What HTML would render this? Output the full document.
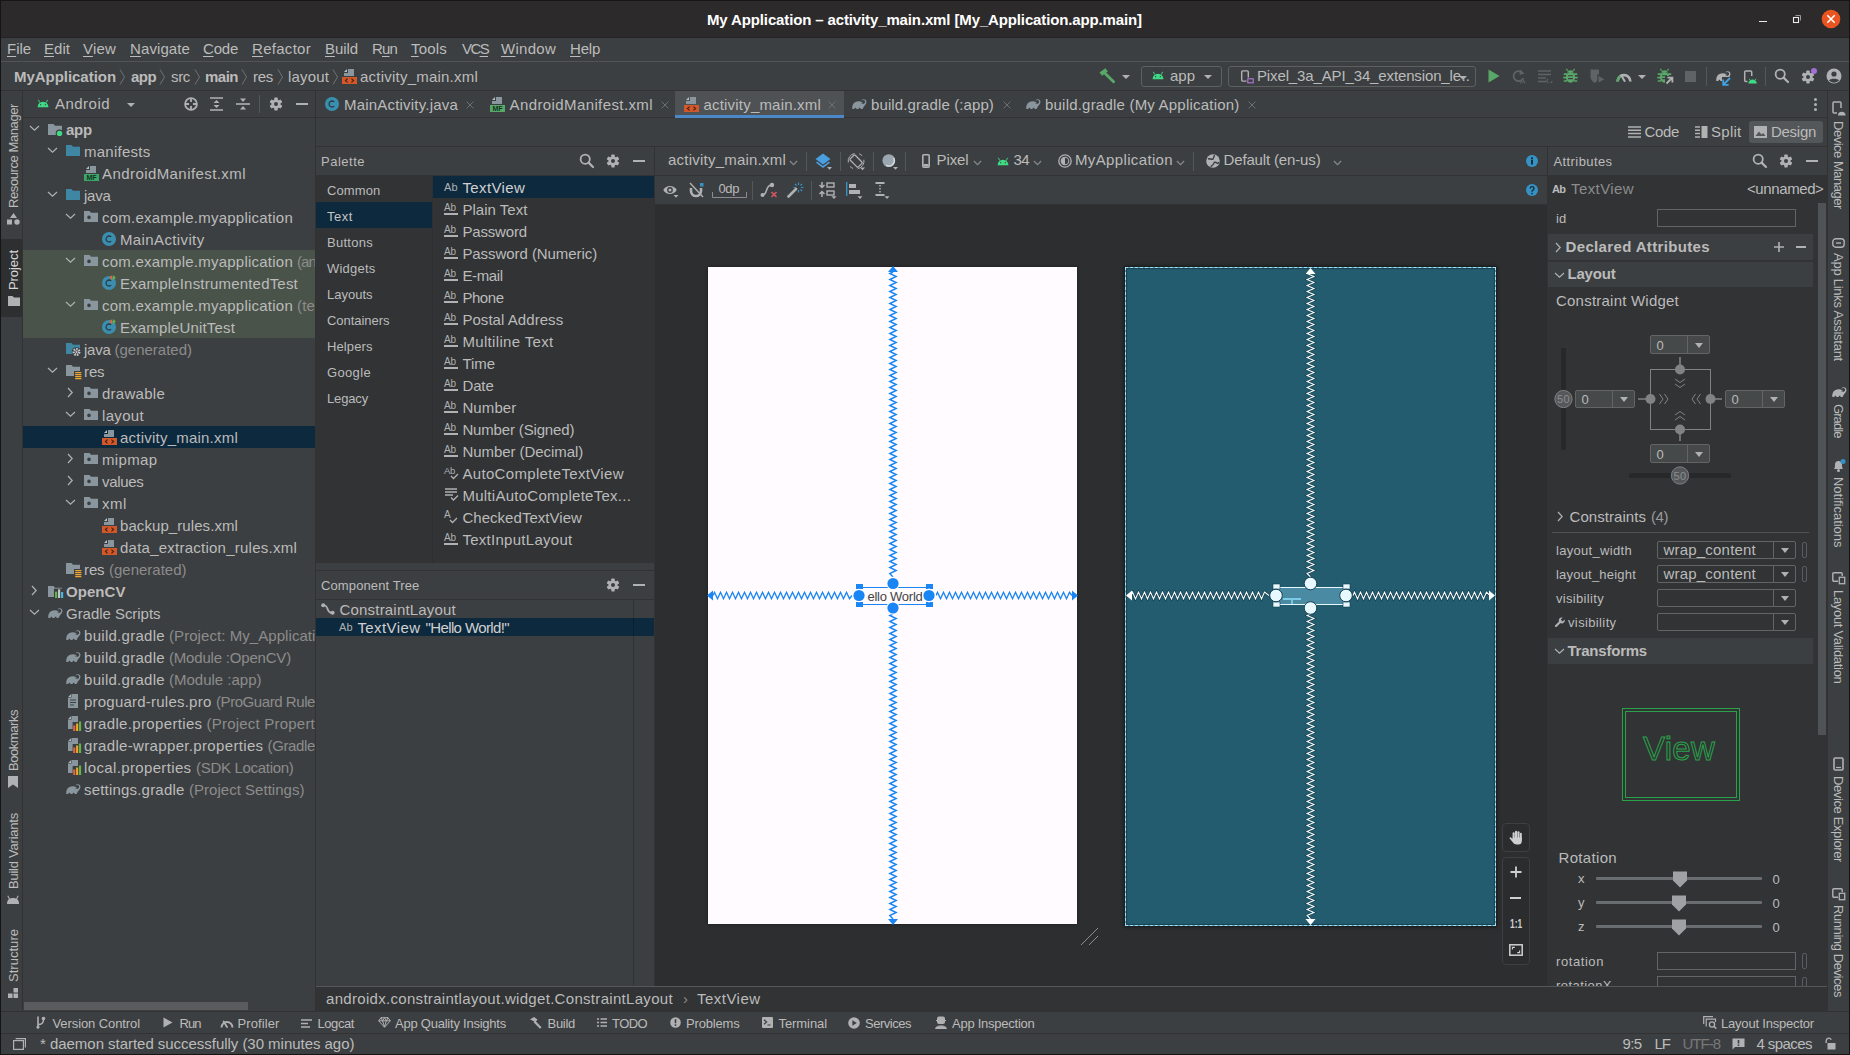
<!DOCTYPE html>
<html><head><meta charset="utf-8"><title>My Application</title>
<style>
html,body{margin:0;padding:0;}
body{width:1850px;height:1055px;overflow:hidden;background:#3c3f41;font-family:"Liberation Sans",sans-serif;position:relative;}
#r{position:absolute;left:0;top:0;width:1850px;height:1055px;overflow:hidden;}
#r div,#r svg,#r span.t{position:absolute;}
span.t{white-space:nowrap;}
u{text-decoration:underline;text-underline-offset:2px;text-decoration-thickness:1px;}
</style></head><body><div id="r">
<div style="left:0px;top:0px;width:1850px;height:37px;background:#2c2a2b;"></div>
<div style="left:0px;top:0px;width:1850px;height:1px;background:#161616;"></div>
<div style="left:0px;top:37px;width:1850px;height:1px;background:#232323;"></div>
<span class="t" style="left:707px;top:11px;font-size:15px;line-height:18px;color:#ffffff;font-weight:bold;letter-spacing:-0.132px;">My Application – activity_main.xml [My_Application.app.main]</span>
<div style="left:1759px;top:21px;width:8px;height:1px;background:#ececec;"></div>
<svg style="left:1792px;top:14px;" width="10" height="10" viewBox="0 0 10 10"><rect x="1.5" y="3.5" width="5" height="5" fill="none" stroke="#ececec" stroke-width="1.1"/><path d="M3.5 1.5 H8.5 V6.5" fill="none" stroke="#9a9a9a" stroke-width="1"/></svg>
<svg style="left:1821px;top:9px;" width="20" height="20" viewBox="0 0 20 20"><circle cx="10" cy="10" r="9.3" fill="#e95420"/><path d="M6.3 6.3 L13.7 13.7 M13.7 6.3 L6.3 13.7" stroke="#fff" stroke-width="1.6"/></svg>
<div style="left:0px;top:38px;width:1850px;height:23px;background:#3c3f41;"></div>
<div style="left:0px;top:61px;width:1850px;height:1px;background:#515355;"></div>
<span class="t" style="left:7px;top:40px;font-size:15px;line-height:18px;color:#bbbbbb;letter-spacing:-0.039px;"><u>F</u>ile</span>
<span class="t" style="left:44px;top:40px;font-size:15px;line-height:18px;color:#bbbbbb;letter-spacing:0.039px;"><u>E</u>dit</span>
<span class="t" style="left:83px;top:40px;font-size:15px;line-height:18px;color:#bbbbbb;letter-spacing:0.191px;"><u>V</u>iew</span>
<span class="t" style="left:130px;top:40px;font-size:15px;line-height:18px;color:#bbbbbb;letter-spacing:0.100px;"><u>N</u>avigate</span>
<span class="t" style="left:203px;top:40px;font-size:15px;line-height:18px;color:#bbbbbb;letter-spacing:-0.215px;"><u>C</u>ode</span>
<span class="t" style="left:252px;top:40px;font-size:15px;line-height:18px;color:#bbbbbb;letter-spacing:0.287px;"><u>R</u>efactor</span>
<span class="t" style="left:325px;top:40px;font-size:15px;line-height:18px;color:#bbbbbb;letter-spacing:-0.069px;"><u>B</u>uild</span>
<span class="t" style="left:372px;top:40px;font-size:15px;line-height:18px;color:#bbbbbb;letter-spacing:-0.839px;">R<u>u</u>n</span>
<span class="t" style="left:411px;top:40px;font-size:15px;line-height:18px;color:#bbbbbb;letter-spacing:0.197px;"><u>T</u>ools</span>
<span class="t" style="left:462px;top:40px;font-size:15px;line-height:18px;color:#bbbbbb;letter-spacing:-1.609px;">VC<u>S</u></span>
<span class="t" style="left:501px;top:40px;font-size:15px;line-height:18px;color:#bbbbbb;letter-spacing:0.276px;"><u>W</u>indow</span>
<span class="t" style="left:570px;top:40px;font-size:15px;line-height:18px;color:#bbbbbb;letter-spacing:-0.211px;"><u>H</u>elp</span>
<div style="left:0px;top:62px;width:1850px;height:28px;background:#3c3f41;"></div>
<div style="left:0px;top:90px;width:1850px;height:1px;background:#323232;"></div>
<span class="t" style="left:14px;top:68px;font-size:15px;line-height:18px;color:#bbbbbb;font-weight:bold;letter-spacing:-0.038px;">MyApplication</span>
<span class="t" style="left:131px;top:68px;font-size:15px;line-height:18px;color:#bbbbbb;font-weight:bold;letter-spacing:-0.552px;">app</span>
<span class="t" style="left:171px;top:68px;font-size:15px;line-height:18px;color:#bbbbbb;letter-spacing:-0.333px;">src</span>
<span class="t" style="left:205px;top:68px;font-size:15px;line-height:18px;color:#bbbbbb;font-weight:bold;letter-spacing:-0.504px;">main</span>
<span class="t" style="left:253px;top:68px;font-size:15px;line-height:18px;color:#bbbbbb;letter-spacing:-0.281px;">res</span>
<span class="t" style="left:288px;top:68px;font-size:15px;line-height:18px;color:#bbbbbb;letter-spacing:0.161px;">layout</span>
<svg style="left:119px;top:69px;" width="7" height="16" viewBox="0 0 7 16"><path d="M1 0.5 L5.5 8 L1 15.5" fill="none" stroke="#6e7173" stroke-width="1"/></svg>
<svg style="left:159px;top:69px;" width="7" height="16" viewBox="0 0 7 16"><path d="M1 0.5 L5.5 8 L1 15.5" fill="none" stroke="#6e7173" stroke-width="1"/></svg>
<svg style="left:194px;top:69px;" width="7" height="16" viewBox="0 0 7 16"><path d="M1 0.5 L5.5 8 L1 15.5" fill="none" stroke="#6e7173" stroke-width="1"/></svg>
<svg style="left:241px;top:69px;" width="7" height="16" viewBox="0 0 7 16"><path d="M1 0.5 L5.5 8 L1 15.5" fill="none" stroke="#6e7173" stroke-width="1"/></svg>
<svg style="left:277px;top:69px;" width="7" height="16" viewBox="0 0 7 16"><path d="M1 0.5 L5.5 8 L1 15.5" fill="none" stroke="#6e7173" stroke-width="1"/></svg>
<svg style="left:332px;top:69px;" width="7" height="16" viewBox="0 0 7 16"><path d="M1 0.5 L5.5 8 L1 15.5" fill="none" stroke="#6e7173" stroke-width="1"/></svg>
<svg style="left:342px;top:69px;" width="15" height="15" viewBox="0 0 15 15"><path d="M6 0 H12 V7 H2 V4 H6 Z" fill="#8a969d"/><path d="M5 0 V3 H2 Z" fill="#b4bec4"/><rect x="0" y="8" width="15" height="7" fill="#d0582a"/><path d="M5.6 9.6 L3.4 11.5 L5.6 13.4 M9.4 9.6 L11.6 11.5 L9.4 13.4" fill="none" stroke="#4a1d0c" stroke-width="1.1"/></svg>
<span class="t" style="left:360px;top:68px;font-size:15px;line-height:18px;color:#bbbbbb;letter-spacing:0.223px;">activity_main.xml</span>
<svg style="left:1099px;top:68px;" width="17" height="16" viewBox="0 0 17 16"><path d="M1.8 6.2 L7.6 1.8" stroke="#59a869" stroke-width="4.2"/><path d="M6.2 5.6 L14.6 13.8" stroke="#59a869" stroke-width="2.8" stroke-linecap="round"/></svg>
<svg style="left:1122.0px;top:75.0px;" width="8" height="4" viewBox="0 0 8 4"><path d="M0 0 L8 0 L4.0 4 Z" fill="#afb1b3"/></svg>
<div style="left:1141px;top:66px;width:81px;height:21px;background:transparent;border:1px solid #5e6060;box-sizing:border-box;border-radius:3px;"></div>
<svg style="left:1151px;top:70px;" width="14" height="10" viewBox="0 0 16 12"><path d="M1.5 11 A6.5 6.5 0 0 1 14.5 11 Z" fill="#3ddc84"/><path d="M4 5.2 L2.6 2.6 M12 5.2 L13.4 2.6" stroke="#3ddc84" stroke-width="1.1" stroke-linecap="round"/><circle cx="5.2" cy="8" r="0.8" fill="#3c3f41"/><circle cx="10.8" cy="8" r="0.8" fill="#3c3f41"/></svg>
<span class="t" style="left:1170px;top:67px;font-size:15px;line-height:18px;color:#bbbbbb;letter-spacing:-0.010px;">app</span>
<svg style="left:1204.0px;top:75.0px;" width="8" height="4" viewBox="0 0 8 4"><path d="M0 0 L8 0 L4.0 4 Z" fill="#afb1b3"/></svg>
<div style="left:1228px;top:66px;width:248px;height:21px;background:transparent;border:1px solid #5e6060;box-sizing:border-box;border-radius:3px;"></div>
<svg style="left:1240px;top:70px;" width="14" height="15" viewBox="0 0 14 15"><rect x="1.7" y="0.9" width="6.6" height="10.2" rx="1" fill="none" stroke="#afb1b3" stroke-width="1.4"/><rect x="6.5" y="7.5" width="8" height="7" fill="#3c3f41"/><rect x="7.8" y="8.8" width="5.4" height="4" fill="none" stroke="#b07ad9" stroke-width="1.1"/></svg>
<span class="t" style="left:1257px;top:67px;font-size:15px;line-height:18px;color:#bbbbbb;letter-spacing:-0.131px;">Pixel_3a_API_34_extension_le</span>
<span class="t" style="left:1461.5px;top:67px;font-size:15px;line-height:18px;color:#bbbbbb;">..</span>
<svg style="left:1459.0px;top:76.0px;" width="8" height="4" viewBox="0 0 8 4"><path d="M0 0 L8 0 L4.0 4 Z" fill="#afb1b3"/></svg>
<svg style="left:1488px;top:69px;" width="12" height="14" viewBox="0 0 12 14"><path d="M0.5 0.5 L11.5 7 L0.5 13.5 Z" fill="#59a869"/></svg>
<svg style="left:1511px;top:69px;" width="15" height="15" viewBox="0 0 15 15"><path d="M11.5 4 A5 5 0 1 0 12.2 9" fill="none" stroke="#5f6365" stroke-width="1.8"/><path d="M9 0.5 L13.5 4.5 L8.5 6 Z" fill="#5f6365"/><path d="M9.5 14.5 L11.7 9.5 L14 14.5 M10.3 13 H13.2" fill="none" stroke="#5f6365" stroke-width="1"/></svg>
<svg style="left:1538px;top:70px;" width="16" height="13" viewBox="0 0 16 13"><path d="M0 1 H13 M0 4.5 H13 M0 8 H8 M0 11.5 H8" stroke="#5f6365" stroke-width="1.6"/><path d="M10 9 A2.5 2.5 0 1 0 14 11" fill="none" stroke="#5f6365" stroke-width="1.2"/></svg>
<svg style="left:1563px;top:68px;" width="15" height="16" viewBox="0 0 15 16"><ellipse cx="7.5" cy="9.3" rx="4.6" ry="5.4" fill="#59a869"/><path d="M4 4.6 A3.6 3.2 0 0 1 11 4.6 Z" fill="#59a869"/><path d="M4.6 2.6 L3.4 0.8 M10.4 2.6 L11.6 0.8" stroke="#59a869" stroke-width="1.2"/><path d="M0.8 6.2 H4 M14.2 6.2 H11 M0.3 9.6 H4 M14.7 9.6 H11 M0.8 13 H4 M14.2 13 H11" stroke="#59a869" stroke-width="1.7"/><path d="M5 7.8 H10 M5 10.6 H10" stroke="#3c3f41" stroke-width="1.1"/></svg>
<svg style="left:1590px;top:69px;" width="16" height="15" viewBox="0 0 16 15"><path d="M0.5 0.5 H9 V7 C9 11 6 13 4.7 14 C3.4 13 0.5 11 0.5 7 Z" fill="#5f6365"/><path d="M8 6 L15.5 10.3 L8 14.6 Z" fill="#5f6365" stroke="#3c3f41" stroke-width="1.2"/></svg>
<svg style="left:1616px;top:70px;" width="16" height="12" viewBox="0 0 16 12"><path d="M1.6 11.5 A6.4 6.4 0 0 1 14.4 11.5" fill="none" stroke="#afb1b3" stroke-width="2.6"/><path d="M1.6 11.5 A6.4 6.4 0 0 1 4.6 6" fill="none" stroke="#59a869" stroke-width="2.6"/><path d="M8.6 11 L5.4 5.4" stroke="#afb1b3" stroke-width="2" stroke-linecap="round"/></svg>
<svg style="left:1638.0px;top:75.0px;" width="8" height="4" viewBox="0 0 8 4"><path d="M0 0 L8 0 L4.0 4 Z" fill="#afb1b3"/></svg>
<svg style="left:1657px;top:68px;" width="17" height="17" viewBox="0 0 17 17"><ellipse cx="7.5" cy="9.3" rx="4.6" ry="5.4" fill="#59a869"/><path d="M4 4.6 A3.6 3.2 0 0 1 11 4.6 Z" fill="#59a869"/><path d="M4.6 2.6 L3.4 0.8 M10.4 2.6 L11.6 0.8" stroke="#59a869" stroke-width="1.2"/><path d="M0.8 6.2 H4 M14.2 6.2 H11 M0.3 9.6 H4 M14.7 9.6 H11 M0.8 13 H4 M14.2 13 H11" stroke="#59a869" stroke-width="1.7"/><path d="M5 7.8 H10 M5 10.6 H10" stroke="#3c3f41" stroke-width="1.1"/><rect x="8" y="8" width="9" height="9" fill="#3c3f41"/><path d="M9.5 15.5 L15 10 M10.5 9.6 H15.4 V14.5" fill="none" stroke="#afb1b3" stroke-width="1.8"/></svg>
<div style="left:1685px;top:71px;width:11px;height:11px;background:#5f6365;"></div>
<div style="left:1706px;top:67px;width:1px;height:19px;background:#55585a;"></div>
<svg style="left:1715.8px;top:70.6px;" width="15.3" height="10.8" viewBox="0 0 17 12"><path d="M15.3 1.2 C14.2 -0.1 12.2 -0.2 11 0.9 C10.6 1.3 10.9 1.8 11.3 1.6 C12.2 0.9 13.5 1 14.2 1.9 C15 2.9 14.6 4.2 13.6 4.9 L12.6 5.6 C12 3.4 10.2 2.4 8 2.4 C4.5 2.4 1.6 3.8 0.6 7.2 C0.2 8.6 0.2 10.2 0.4 11.6 L2.6 11.6 C2.6 10.6 3 9.8 3.8 9.8 C4.6 9.8 4.9 10.6 4.9 11.6 L7.3 11.6 C7.3 10.6 7.7 9.8 8.5 9.8 C9.3 9.8 9.6 10.6 9.6 11.6 L11.6 11.6 C12.4 9.6 13 8.2 14.6 6.6 C16.2 5.1 16.5 2.7 15.3 1.2 Z" fill="#afb1b3"/><circle cx="11.3" cy="4.6" r="0.7" fill="#3c3f41"/></svg>
<svg style="left:1722px;top:77px;" width="9" height="9" viewBox="0 0 9 9"><rect width="9" height="9" fill="#3c3f41"/><path d="M8 1 L2 7 M1.2 2.4 V7.8 H6.6" fill="none" stroke="#40a0e0" stroke-width="1.8"/></svg>
<svg style="left:1743px;top:70px;" width="16" height="15" viewBox="0 0 16 15"><rect x="1.7" y="0.9" width="7" height="10.6" rx="1" fill="none" stroke="#afb1b3" stroke-width="1.5"/><rect x="4.5" y="6" width="11" height="9" fill="#3c3f41"/><path d="M5.4 13.6 A4.2 4.2 0 0 1 13.8 13.6 Z" fill="#3ddc84"/><path d="M7 10.2 L6.2 8.8 M12.2 10.2 L13 8.8" stroke="#3ddc84" stroke-width="0.9"/></svg>
<div style="left:1765px;top:67px;width:1px;height:19px;background:#55585a;"></div>
<svg style="left:1774px;top:68px;" width="16" height="16" viewBox="0 0 16 16"><circle cx="6.2" cy="6.2" r="4.6" fill="none" stroke="#afb1b3" stroke-width="1.8"/><path d="M9.6 9.6 L14 14" stroke="#afb1b3" stroke-width="2.2" stroke-linecap="round"/></svg>
<svg style="left:1800px;top:69px;" width="16" height="16" viewBox="0 0 16 16"><g transform="translate(8,8) scale(0.9142857142857144)"><rect x="-1.9" y="-7" width="3.8" height="3.6" rx="0.8" transform="rotate(0)" fill="#afb1b3"/><rect x="-1.9" y="-7" width="3.8" height="3.6" rx="0.8" transform="rotate(60)" fill="#afb1b3"/><rect x="-1.9" y="-7" width="3.8" height="3.6" rx="0.8" transform="rotate(120)" fill="#afb1b3"/><rect x="-1.9" y="-7" width="3.8" height="3.6" rx="0.8" transform="rotate(180)" fill="#afb1b3"/><rect x="-1.9" y="-7" width="3.8" height="3.6" rx="0.8" transform="rotate(240)" fill="#afb1b3"/><rect x="-1.9" y="-7" width="3.8" height="3.6" rx="0.8" transform="rotate(300)" fill="#afb1b3"/><circle r="5" fill="#afb1b3"/><circle r="2.2" fill="#3c3f41"/></g></svg>
<svg style="left:1811px;top:68px;" width="6" height="6" viewBox="0 0 6 6"><circle cx="3" cy="3" r="3" fill="#a36fd6"/></svg>
<svg style="left:1826px;top:68px;" width="16" height="16" viewBox="0 0 16 16"><circle cx="8" cy="8" r="7.5" fill="#afb1b3"/><circle cx="8" cy="6" r="2.6" fill="#3c3f41"/><path d="M3 12.6 C4 10 12 10 13 12.6 A7 7 0 0 1 3 12.6 Z" fill="#3c3f41"/></svg>
<div style="left:0px;top:91px;width:22px;height:920px;background:#3c3f41;"></div>
<div style="left:22px;top:91px;width:1px;height:920px;background:#323232;"></div>
<div style="left:0px;top:239px;width:22px;height:78px;background:#2d2f30;"></div>
<span class="t" style="left:5.5px;top:208px;font-size:13px;line-height:16px;color:#bbbbbb;letter-spacing:-0.412px;transform-origin:0 0;transform:rotate(-90deg);">Resource Manager</span>
<svg style="left:7px;top:213px;" width="13" height="12" viewBox="0 0 13 12"><path d="M6.5 0 L10 5 H3 Z" fill="#afb1b3"/><rect x="0" y="6.5" width="5" height="5" fill="#afb1b3"/><circle cx="10" cy="9" r="2.7" fill="#afb1b3"/></svg>
<span class="t" style="left:5.5px;top:290px;font-size:13px;line-height:16px;color:#d6d6d6;letter-spacing:-0.067px;transform-origin:0 0;transform:rotate(-90deg);">Project</span>
<svg style="left:7.5px;top:296px;" width="12" height="10" viewBox="0 0 12 10"><path d="M0 0 H4.5 L6 1.5 H12 V10 H0 Z" fill="#afb1b3"/></svg>
<span class="t" style="left:5.5px;top:771px;font-size:13px;line-height:16px;color:#bbbbbb;letter-spacing:-0.448px;transform-origin:0 0;transform:rotate(-90deg);">Bookmarks</span>
<svg style="left:8px;top:776px;" width="10" height="12" viewBox="0 0 10 12"><path d="M0 0 H10 V12 L5 8.5 L0 12 Z" fill="#afb1b3"/></svg>
<span class="t" style="left:5.5px;top:889px;font-size:13px;line-height:16px;color:#bbbbbb;letter-spacing:-0.233px;transform-origin:0 0;transform:rotate(-90deg);">Build Variants</span>
<svg style="left:7px;top:895px;" width="12" height="9" viewBox="0 0 12 9"><path d="M0 9 C0 5 2 3 6 3 C10 3 12 5 12 9 Z" fill="#afb1b3"/><path d="M2.5 4 L0.8 0.8 M9.5 4 L11.2 0.8" stroke="#afb1b3" stroke-width="1.1"/></svg>
<span class="t" style="left:5.5px;top:982px;font-size:13px;line-height:16px;color:#bbbbbb;letter-spacing:0.028px;transform-origin:0 0;transform:rotate(-90deg);">Structure</span>
<svg style="left:8px;top:988px;" width="10" height="10" viewBox="0 0 10 10"><rect x="5.5" y="0" width="4.5" height="4.5" fill="#afb1b3"/><rect x="0" y="5.5" width="4.5" height="4.5" fill="#afb1b3"/><rect x="5.5" y="5.5" width="4.5" height="4.5" fill="#afb1b3"/></svg>
<div style="left:23px;top:91px;width:292px;height:26px;background:#3c3f41;"></div>
<div style="left:23px;top:117px;width:292px;height:1px;background:#323232;"></div>
<div style="left:315px;top:91px;width:1px;height:920px;background:#323232;"></div>
<svg style="left:36px;top:98px;" width="14" height="10" viewBox="0 0 16 12"><path d="M1.5 11 A6.5 6.5 0 0 1 14.5 11 Z" fill="#3ddc84"/><path d="M4 5.2 L2.6 2.6 M12 5.2 L13.4 2.6" stroke="#3ddc84" stroke-width="1.1" stroke-linecap="round"/><circle cx="5.2" cy="8" r="0.8" fill="#3c3f41"/><circle cx="10.8" cy="8" r="0.8" fill="#3c3f41"/></svg>
<span class="t" style="left:55px;top:95px;font-size:15px;line-height:18px;color:#bbbbbb;letter-spacing:0.471px;">Android</span>
<svg style="left:127.0px;top:103.0px;" width="8" height="4" viewBox="0 0 8 4"><path d="M0 0 L8 0 L4.0 4 Z" fill="#afb1b3"/></svg>
<svg style="left:184px;top:97px;" width="14" height="14" viewBox="0 0 14 14"><circle cx="7" cy="7" r="5.9" fill="none" stroke="#afb1b3" stroke-width="1.8"/><path d="M7 1 V5 M7 9 V13 M1 7 H5 M9 7 H13" stroke="#afb1b3" stroke-width="1.8"/></svg>
<svg style="left:210px;top:97px;" width="13" height="14" viewBox="0 0 13 14"><path d="M0 1 H13 M0 13 H13" stroke="#afb1b3" stroke-width="1.6"/><path d="M6.5 3 L9.5 6 H3.5 Z M6.5 11 L9.5 8 H3.5 Z" fill="#afb1b3"/></svg>
<svg style="left:236px;top:97px;" width="14" height="14" viewBox="0 0 14 14"><path d="M0 7 H14" stroke="#afb1b3" stroke-width="1.6"/><path d="M7 5 L10 1.5 H4 Z M7 9 L10 12.5 H4 Z" fill="#afb1b3"/></svg>
<div style="left:259px;top:95px;width:1px;height:18px;background:#55585a;"></div>
<svg style="left:268px;top:96px;" width="16" height="16" viewBox="0 0 16 16"><g transform="translate(8,8) scale(0.9142857142857144)"><rect x="-1.9" y="-7" width="3.8" height="3.6" rx="0.8" transform="rotate(0)" fill="#afb1b3"/><rect x="-1.9" y="-7" width="3.8" height="3.6" rx="0.8" transform="rotate(60)" fill="#afb1b3"/><rect x="-1.9" y="-7" width="3.8" height="3.6" rx="0.8" transform="rotate(120)" fill="#afb1b3"/><rect x="-1.9" y="-7" width="3.8" height="3.6" rx="0.8" transform="rotate(180)" fill="#afb1b3"/><rect x="-1.9" y="-7" width="3.8" height="3.6" rx="0.8" transform="rotate(240)" fill="#afb1b3"/><rect x="-1.9" y="-7" width="3.8" height="3.6" rx="0.8" transform="rotate(300)" fill="#afb1b3"/><circle r="5" fill="#afb1b3"/><circle r="2.2" fill="#3c3f41"/></g></svg>
<svg style="left:296.0px;top:103px;" width="12" height="2" viewBox="0 0 12 2"><rect width="12" height="2" fill="#afb1b3"/></svg>
<div style="left:23px;top:118px;width:292px;height:893px;background:#3c3f41;"></div>
<div style="left:23px;top:250px;width:292px;height:88px;background:#4a534a;"></div>
<div style="left:23px;top:426px;width:292px;height:22px;background:#0d293e;"></div>
<div style="left:23px;top:118px;width:292px;height:880px;overflow:hidden;">
<div style="left:-23px;top:-118px;width:400px;height:900px;">
<svg style="left:29.0px;top:125.0px;" width="11" height="7" viewBox="0 0 11 7"><path d="M1 1 L5.5 5.2 L10 1" fill="none" stroke="#afb1b3" stroke-width="1.2"/></svg>
<svg style="left:48px;top:124px;" width="17" height="14" viewBox="0 0 17 14"><path d="M0 0 H5.5 L7 1.8 H14 V11 H0 Z" fill="#8a969d"/><circle cx="11.5" cy="9.4" r="3.8" fill="#3c3f41"/><circle cx="11.5" cy="9.4" r="2.7" fill="#3ddc84"/></svg>
<span class="t" style="left:66px;top:121px;font-size:15px;line-height:18px;color:#bbbbbb;font-weight:bold;letter-spacing:-0.219px;">app</span>
<svg style="left:47.0px;top:147.0px;" width="11" height="7" viewBox="0 0 11 7"><path d="M1 1 L5.5 5.2 L10 1" fill="none" stroke="#afb1b3" stroke-width="1.2"/></svg>
<svg style="left:66px;top:145px;" width="14" height="11" viewBox="0 0 14 11"><path d="M0 0 H5.5 L7 1.8 H14 V11 H0 Z" fill="#3e86a2"/></svg>
<span class="t" style="left:84px;top:143px;font-size:15px;line-height:18px;color:#bbbbbb;letter-spacing:0.255px;">manifests</span>
<svg style="left:84px;top:166px;" width="15" height="15" viewBox="0 0 15 15"><path d="M6 0 H12 V7 H2 V4 H6 Z" fill="#8a969d"/><path d="M5 0 V3 H2 Z" fill="#b4bec4"/><rect x="0" y="8" width="15" height="7" fill="#3ba56a"/><text x="7.5" y="14.3" font-family="Liberation Sans" font-size="7" font-weight="bold" text-anchor="middle" fill="#12351f">MF</text></svg>
<span class="t" style="left:102px;top:165px;font-size:15px;line-height:18px;color:#bbbbbb;letter-spacing:0.426px;">AndroidManifest.xml</span>
<svg style="left:47.0px;top:191.0px;" width="11" height="7" viewBox="0 0 11 7"><path d="M1 1 L5.5 5.2 L10 1" fill="none" stroke="#afb1b3" stroke-width="1.2"/></svg>
<svg style="left:66px;top:189px;" width="14" height="11" viewBox="0 0 14 11"><path d="M0 0 H5.5 L7 1.8 H14 V11 H0 Z" fill="#3e86a2"/></svg>
<span class="t" style="left:84px;top:187px;font-size:15px;line-height:18px;color:#bbbbbb;letter-spacing:-0.254px;">java</span>
<svg style="left:65.0px;top:213.0px;" width="11" height="7" viewBox="0 0 11 7"><path d="M1 1 L5.5 5.2 L10 1" fill="none" stroke="#afb1b3" stroke-width="1.2"/></svg>
<svg style="left:84px;top:211px;" width="14" height="11" viewBox="0 0 14 11"><path d="M0 0 H5.5 L7 1.8 H14 V11 H0 Z" fill="#8a969d"/><circle cx="5" cy="6.4" r="1.8" fill="#3c3f41"/></svg>
<span class="t" style="left:102px;top:209px;font-size:15px;line-height:18px;color:#bbbbbb;letter-spacing:0.236px;">com.example.myapplication</span>
<svg style="left:101px;top:231px;overflow:visible;" width="16" height="16" viewBox="0 0 16 16"><circle cx="8" cy="8" r="7" fill="#3a8fb0"/><path d="M10.2 5.9 A3 3 0 1 0 10.2 10.1" fill="none" stroke="#2b3b44" stroke-width="1.3"/></svg>
<span class="t" style="left:120px;top:231px;font-size:15px;line-height:18px;color:#bbbbbb;letter-spacing:0.374px;">MainActivity</span>
<svg style="left:65.0px;top:257.0px;" width="11" height="7" viewBox="0 0 11 7"><path d="M1 1 L5.5 5.2 L10 1" fill="none" stroke="#afb1b3" stroke-width="1.2"/></svg>
<svg style="left:84px;top:255px;" width="14" height="11" viewBox="0 0 14 11"><path d="M0 0 H5.5 L7 1.8 H14 V11 H0 Z" fill="#8a969d"/><circle cx="5" cy="6.4" r="1.8" fill="#3c3f41"/></svg>
<span class="t" style="left:102px;top:253px;font-size:15px;line-height:18px;color:#bbbbbb;letter-spacing:0.236px;">com.example.myapplication</span>
<span class="t" style="left:297px;top:253px;font-size:15px;line-height:18px;color:#8c8c8c;letter-spacing:-0.896px;">(an</span>
<svg style="left:101px;top:275px;overflow:visible;" width="16" height="16" viewBox="0 0 16 16"><circle cx="8" cy="8" r="7" fill="#3a8fb0"/><path d="M10.2 5.9 A3 3 0 1 0 10.2 10.1" fill="none" stroke="#2b3b44" stroke-width="1.3"/><path d="M8.4 2.6 L11.2 0 V5.2 Z" fill="#e8643a"/><path d="M12 0 L14.9 2.6 L12 5.2 Z" fill="#62b543"/></svg>
<span class="t" style="left:120px;top:275px;font-size:15px;line-height:18px;color:#bbbbbb;letter-spacing:0.198px;">ExampleInstrumentedTest</span>
<svg style="left:65.0px;top:301.0px;" width="11" height="7" viewBox="0 0 11 7"><path d="M1 1 L5.5 5.2 L10 1" fill="none" stroke="#afb1b3" stroke-width="1.2"/></svg>
<svg style="left:84px;top:299px;" width="14" height="11" viewBox="0 0 14 11"><path d="M0 0 H5.5 L7 1.8 H14 V11 H0 Z" fill="#8a969d"/><circle cx="5" cy="6.4" r="1.8" fill="#3c3f41"/></svg>
<span class="t" style="left:102px;top:297px;font-size:15px;line-height:18px;color:#bbbbbb;letter-spacing:0.236px;">com.example.myapplication</span>
<span class="t" style="left:297px;top:297px;font-size:15px;line-height:18px;color:#8c8c8c;letter-spacing:0.161px;">(te</span>
<svg style="left:101px;top:319px;overflow:visible;" width="16" height="16" viewBox="0 0 16 16"><circle cx="8" cy="8" r="7" fill="#3a8fb0"/><path d="M10.2 5.9 A3 3 0 1 0 10.2 10.1" fill="none" stroke="#2b3b44" stroke-width="1.3"/><path d="M8.4 2.6 L11.2 0 V5.2 Z" fill="#e8643a"/><path d="M12 0 L14.9 2.6 L12 5.2 Z" fill="#62b543"/></svg>
<span class="t" style="left:120px;top:319px;font-size:15px;line-height:18px;color:#bbbbbb;letter-spacing:0.164px;">ExampleUnitTest</span>
<svg style="left:66px;top:343px;" width="17" height="15" viewBox="0 0 17 15"><path d="M0 0 H5.5 L7 1.8 H14 V11 H0 Z" fill="#3e86a2"/><circle cx="10.5" cy="9" r="4.8" fill="#3c3f41"/><circle cx="10.5" cy="9" r="2.7" fill="none" stroke="#c4c7c9" stroke-width="2.6" stroke-dasharray="1.5 0.9"/><circle cx="10.5" cy="9" r="1" fill="#c4c7c9"/></svg>
<span class="t" style="left:84px;top:341px;font-size:15px;line-height:18px;color:#bbbbbb;letter-spacing:-0.254px;">java</span>
<span class="t" style="left:114.5px;top:341px;font-size:15px;line-height:18px;color:#8c8c8c;letter-spacing:-0.007px;">(generated)</span>
<svg style="left:47.0px;top:367.0px;" width="11" height="7" viewBox="0 0 11 7"><path d="M1 1 L5.5 5.2 L10 1" fill="none" stroke="#afb1b3" stroke-width="1.2"/></svg>
<svg style="left:66px;top:365px;" width="17" height="15" viewBox="0 0 17 15"><path d="M0 0 H5.5 L7 1.8 H14 V11 H0 Z" fill="#8a969d"/><rect x="8" y="6" width="9" height="9" fill="#3c3f41"/><path d="M9.2 7.6 H15.4 M9.2 9.6 H15.4 M9.2 11.6 H15.4 M9.2 13.6 H15.4" stroke="#f0a732" stroke-width="1.2"/></svg>
<span class="t" style="left:84px;top:363px;font-size:15px;line-height:18px;color:#bbbbbb;letter-spacing:-0.115px;">res</span>
<svg style="left:66.7px;top:387.0px;" width="7" height="11" viewBox="0 0 7 11"><path d="M1 1 L5.2 5.5 L1 10" fill="none" stroke="#afb1b3" stroke-width="1.2"/></svg>
<svg style="left:84px;top:387px;" width="14" height="11" viewBox="0 0 14 11"><path d="M0 0 H5.5 L7 1.8 H14 V11 H0 Z" fill="#8a969d"/><circle cx="5" cy="6.4" r="1.8" fill="#3c3f41"/></svg>
<span class="t" style="left:102px;top:385px;font-size:15px;line-height:18px;color:#bbbbbb;letter-spacing:0.266px;">drawable</span>
<svg style="left:65.0px;top:411.0px;" width="11" height="7" viewBox="0 0 11 7"><path d="M1 1 L5.5 5.2 L10 1" fill="none" stroke="#afb1b3" stroke-width="1.2"/></svg>
<svg style="left:84px;top:409px;" width="14" height="11" viewBox="0 0 14 11"><path d="M0 0 H5.5 L7 1.8 H14 V11 H0 Z" fill="#8a969d"/><circle cx="5" cy="6.4" r="1.8" fill="#3c3f41"/></svg>
<span class="t" style="left:102px;top:407px;font-size:15px;line-height:18px;color:#bbbbbb;letter-spacing:0.328px;">layout</span>
<svg style="left:102px;top:430px;" width="15" height="15" viewBox="0 0 15 15"><path d="M6 0 H12 V7 H2 V4 H6 Z" fill="#8a969d"/><path d="M5 0 V3 H2 Z" fill="#b4bec4"/><rect x="0" y="8" width="15" height="7" fill="#d0582a"/><path d="M5.6 9.6 L3.4 11.5 L5.6 13.4 M9.4 9.6 L11.6 11.5 L9.4 13.4" fill="none" stroke="#4a1d0c" stroke-width="1.1"/></svg>
<span class="t" style="left:120px;top:429px;font-size:15px;line-height:18px;color:#bbbbbb;letter-spacing:0.223px;">activity_main.xml</span>
<svg style="left:66.7px;top:453.0px;" width="7" height="11" viewBox="0 0 7 11"><path d="M1 1 L5.2 5.5 L1 10" fill="none" stroke="#afb1b3" stroke-width="1.2"/></svg>
<svg style="left:84px;top:453px;" width="14" height="11" viewBox="0 0 14 11"><path d="M0 0 H5.5 L7 1.8 H14 V11 H0 Z" fill="#8a969d"/><circle cx="5" cy="6.4" r="1.8" fill="#3c3f41"/></svg>
<span class="t" style="left:102px;top:451px;font-size:15px;line-height:18px;color:#bbbbbb;letter-spacing:0.357px;">mipmap</span>
<svg style="left:66.7px;top:475.0px;" width="7" height="11" viewBox="0 0 7 11"><path d="M1 1 L5.2 5.5 L1 10" fill="none" stroke="#afb1b3" stroke-width="1.2"/></svg>
<svg style="left:84px;top:475px;" width="14" height="11" viewBox="0 0 14 11"><path d="M0 0 H5.5 L7 1.8 H14 V11 H0 Z" fill="#8a969d"/><circle cx="5" cy="6.4" r="1.8" fill="#3c3f41"/></svg>
<span class="t" style="left:102px;top:473px;font-size:15px;line-height:18px;color:#bbbbbb;letter-spacing:-0.310px;">values</span>
<svg style="left:65.0px;top:499.0px;" width="11" height="7" viewBox="0 0 11 7"><path d="M1 1 L5.5 5.2 L10 1" fill="none" stroke="#afb1b3" stroke-width="1.2"/></svg>
<svg style="left:84px;top:497px;" width="14" height="11" viewBox="0 0 14 11"><path d="M0 0 H5.5 L7 1.8 H14 V11 H0 Z" fill="#8a969d"/><circle cx="5" cy="6.4" r="1.8" fill="#3c3f41"/></svg>
<span class="t" style="left:102px;top:495px;font-size:15px;line-height:18px;color:#bbbbbb;letter-spacing:0.557px;">xml</span>
<svg style="left:102px;top:518px;" width="15" height="15" viewBox="0 0 15 15"><path d="M6 0 H12 V7 H2 V4 H6 Z" fill="#8a969d"/><path d="M5 0 V3 H2 Z" fill="#b4bec4"/><rect x="0" y="8" width="15" height="7" fill="#d0582a"/><path d="M5.6 9.6 L3.4 11.5 L5.6 13.4 M9.4 9.6 L11.6 11.5 L9.4 13.4" fill="none" stroke="#4a1d0c" stroke-width="1.1"/></svg>
<span class="t" style="left:120px;top:517px;font-size:15px;line-height:18px;color:#bbbbbb;letter-spacing:0.079px;">backup_rules.xml</span>
<svg style="left:102px;top:540px;" width="15" height="15" viewBox="0 0 15 15"><path d="M6 0 H12 V7 H2 V4 H6 Z" fill="#8a969d"/><path d="M5 0 V3 H2 Z" fill="#b4bec4"/><rect x="0" y="8" width="15" height="7" fill="#d0582a"/><path d="M5.6 9.6 L3.4 11.5 L5.6 13.4 M9.4 9.6 L11.6 11.5 L9.4 13.4" fill="none" stroke="#4a1d0c" stroke-width="1.1"/></svg>
<span class="t" style="left:120px;top:539px;font-size:15px;line-height:18px;color:#bbbbbb;letter-spacing:0.242px;">data_extraction_rules.xml</span>
<svg style="left:66px;top:563px;" width="17" height="15" viewBox="0 0 17 15"><path d="M0 0 H5.5 L7 1.8 H14 V11 H0 Z" fill="#8a969d"/><rect x="8" y="6" width="9" height="9" fill="#3c3f41"/><path d="M9.2 7.6 H15.4 M9.2 9.6 H15.4 M9.2 11.6 H15.4 M9.2 13.6 H15.4" stroke="#f0a732" stroke-width="1.2"/></svg>
<span class="t" style="left:84px;top:561px;font-size:15px;line-height:18px;color:#bbbbbb;letter-spacing:-0.115px;">res</span>
<span class="t" style="left:109px;top:561px;font-size:15px;line-height:18px;color:#8c8c8c;letter-spacing:-0.007px;">(generated)</span>
<svg style="left:30.700000000000003px;top:585.0px;" width="7" height="11" viewBox="0 0 7 11"><path d="M1 1 L5.2 5.5 L1 10" fill="none" stroke="#afb1b3" stroke-width="1.2"/></svg>
<svg style="left:48px;top:586px;" width="17" height="13" viewBox="0 0 17 13"><path d="M0 0 H5.5 L7 1.8 H14 V11 H0 Z" fill="#8a969d"/><rect x="6" y="2.6" width="11" height="10.4" fill="#3c3f41"/><rect x="7" y="5.7" width="2.2" height="6.3" fill="#62b543"/><rect x="10" y="3.4" width="2.2" height="8.6" fill="#c4c7c9"/><rect x="13" y="6" width="2.2" height="6" fill="#40b6e0"/></svg>
<span class="t" style="left:66px;top:583px;font-size:15px;line-height:18px;color:#bbbbbb;font-weight:bold;letter-spacing:0.057px;">OpenCV</span>
<svg style="left:29.0px;top:609.0px;" width="11" height="7" viewBox="0 0 11 7"><path d="M1 1 L5.5 5.2 L10 1" fill="none" stroke="#afb1b3" stroke-width="1.2"/></svg>
<svg style="left:47.8px;top:607.6px;" width="15.3" height="10.8" viewBox="0 0 17 12"><path d="M15.3 1.2 C14.2 -0.1 12.2 -0.2 11 0.9 C10.6 1.3 10.9 1.8 11.3 1.6 C12.2 0.9 13.5 1 14.2 1.9 C15 2.9 14.6 4.2 13.6 4.9 L12.6 5.6 C12 3.4 10.2 2.4 8 2.4 C4.5 2.4 1.6 3.8 0.6 7.2 C0.2 8.6 0.2 10.2 0.4 11.6 L2.6 11.6 C2.6 10.6 3 9.8 3.8 9.8 C4.6 9.8 4.9 10.6 4.9 11.6 L7.3 11.6 C7.3 10.6 7.7 9.8 8.5 9.8 C9.3 9.8 9.6 10.6 9.6 11.6 L11.6 11.6 C12.4 9.6 13 8.2 14.6 6.6 C16.2 5.1 16.5 2.7 15.3 1.2 Z" fill="#8a969d"/><circle cx="11.3" cy="4.6" r="0.7" fill="#3c3f41"/></svg>
<span class="t" style="left:66px;top:605px;font-size:15px;line-height:18px;color:#bbbbbb;letter-spacing:-0.039px;">Gradle Scripts</span>
<svg style="left:65.8px;top:629.6px;" width="15.3" height="10.8" viewBox="0 0 17 12"><path d="M15.3 1.2 C14.2 -0.1 12.2 -0.2 11 0.9 C10.6 1.3 10.9 1.8 11.3 1.6 C12.2 0.9 13.5 1 14.2 1.9 C15 2.9 14.6 4.2 13.6 4.9 L12.6 5.6 C12 3.4 10.2 2.4 8 2.4 C4.5 2.4 1.6 3.8 0.6 7.2 C0.2 8.6 0.2 10.2 0.4 11.6 L2.6 11.6 C2.6 10.6 3 9.8 3.8 9.8 C4.6 9.8 4.9 10.6 4.9 11.6 L7.3 11.6 C7.3 10.6 7.7 9.8 8.5 9.8 C9.3 9.8 9.6 10.6 9.6 11.6 L11.6 11.6 C12.4 9.6 13 8.2 14.6 6.6 C16.2 5.1 16.5 2.7 15.3 1.2 Z" fill="#8a969d"/><circle cx="11.3" cy="4.6" r="0.7" fill="#3c3f41"/></svg>
<span class="t" style="left:84px;top:627px;font-size:15px;line-height:18px;color:#bbbbbb;letter-spacing:0.286px;">build.gradle</span>
<span class="t" style="left:169px;top:627px;font-size:15px;line-height:18px;color:#8c8c8c;letter-spacing:0.065px;">(Project: My_Applicati</span>
<svg style="left:65.8px;top:651.6px;" width="15.3" height="10.8" viewBox="0 0 17 12"><path d="M15.3 1.2 C14.2 -0.1 12.2 -0.2 11 0.9 C10.6 1.3 10.9 1.8 11.3 1.6 C12.2 0.9 13.5 1 14.2 1.9 C15 2.9 14.6 4.2 13.6 4.9 L12.6 5.6 C12 3.4 10.2 2.4 8 2.4 C4.5 2.4 1.6 3.8 0.6 7.2 C0.2 8.6 0.2 10.2 0.4 11.6 L2.6 11.6 C2.6 10.6 3 9.8 3.8 9.8 C4.6 9.8 4.9 10.6 4.9 11.6 L7.3 11.6 C7.3 10.6 7.7 9.8 8.5 9.8 C9.3 9.8 9.6 10.6 9.6 11.6 L11.6 11.6 C12.4 9.6 13 8.2 14.6 6.6 C16.2 5.1 16.5 2.7 15.3 1.2 Z" fill="#8a969d"/><circle cx="11.3" cy="4.6" r="0.7" fill="#3c3f41"/></svg>
<span class="t" style="left:84px;top:649px;font-size:15px;line-height:18px;color:#bbbbbb;letter-spacing:0.286px;">build.gradle</span>
<span class="t" style="left:169px;top:649px;font-size:15px;line-height:18px;color:#8c8c8c;letter-spacing:-0.192px;">(Module :OpenCV)</span>
<svg style="left:65.8px;top:673.6px;" width="15.3" height="10.8" viewBox="0 0 17 12"><path d="M15.3 1.2 C14.2 -0.1 12.2 -0.2 11 0.9 C10.6 1.3 10.9 1.8 11.3 1.6 C12.2 0.9 13.5 1 14.2 1.9 C15 2.9 14.6 4.2 13.6 4.9 L12.6 5.6 C12 3.4 10.2 2.4 8 2.4 C4.5 2.4 1.6 3.8 0.6 7.2 C0.2 8.6 0.2 10.2 0.4 11.6 L2.6 11.6 C2.6 10.6 3 9.8 3.8 9.8 C4.6 9.8 4.9 10.6 4.9 11.6 L7.3 11.6 C7.3 10.6 7.7 9.8 8.5 9.8 C9.3 9.8 9.6 10.6 9.6 11.6 L11.6 11.6 C12.4 9.6 13 8.2 14.6 6.6 C16.2 5.1 16.5 2.7 15.3 1.2 Z" fill="#8a969d"/><circle cx="11.3" cy="4.6" r="0.7" fill="#3c3f41"/></svg>
<span class="t" style="left:84px;top:671px;font-size:15px;line-height:18px;color:#bbbbbb;letter-spacing:0.286px;">build.gradle</span>
<span class="t" style="left:169px;top:671px;font-size:15px;line-height:18px;color:#8c8c8c;letter-spacing:-0.006px;">(Module :app)</span>
<svg style="left:68px;top:694px;" width="10" height="14" viewBox="0 0 10 14"><path d="M3.5 0 H10 V14 H0 V3.5 Z" fill="#8a969d"/><path d="M3.5 0 V3.5 H0 Z" fill="#3c3f41"/><path d="M3 0.2 V3 H0.2 Z" fill="#aab4ba"/><path d="M2 6 H8 M2 8.5 H8 M2 11 H6" stroke="#3c3f41" stroke-width="1"/></svg>
<span class="t" style="left:84px;top:693px;font-size:15px;line-height:18px;color:#bbbbbb;letter-spacing:0.226px;">proguard-rules.pro</span>
<span class="t" style="left:216px;top:693px;font-size:15px;line-height:18px;color:#8c8c8c;letter-spacing:-0.433px;">(ProGuard Rule</span>
<svg style="left:68px;top:716px;" width="14" height="15" viewBox="0 0 14 15"><path d="M3.5 0 H10 V6 H4.6 V13 H0 V3.5 Z" fill="#8a969d"/><path d="M3.5 0 V3.5 H0 Z" fill="#3c3f41"/><path d="M3 0.2 V3 H0.2 Z" fill="#aab4ba"/><rect x="5.2" y="9.5" width="2.1" height="5.5" fill="#e8643a"/><rect x="8.1" y="7.5" width="2.1" height="7.5" fill="#f0a732"/><rect x="11" y="5.5" width="2.1" height="9.5" fill="#62b543"/></svg>
<span class="t" style="left:84px;top:715px;font-size:15px;line-height:18px;color:#bbbbbb;letter-spacing:0.347px;">gradle.properties</span>
<span class="t" style="left:206.5px;top:715px;font-size:15px;line-height:18px;color:#8c8c8c;letter-spacing:0.215px;">(Project Propert</span>
<svg style="left:68px;top:738px;" width="14" height="15" viewBox="0 0 14 15"><path d="M3.5 0 H10 V6 H4.6 V13 H0 V3.5 Z" fill="#8a969d"/><path d="M3.5 0 V3.5 H0 Z" fill="#3c3f41"/><path d="M3 0.2 V3 H0.2 Z" fill="#aab4ba"/><rect x="5.2" y="9.5" width="2.1" height="5.5" fill="#e8643a"/><rect x="8.1" y="7.5" width="2.1" height="7.5" fill="#f0a732"/><rect x="11" y="5.5" width="2.1" height="9.5" fill="#62b543"/></svg>
<span class="t" style="left:84px;top:737px;font-size:15px;line-height:18px;color:#bbbbbb;letter-spacing:0.341px;">gradle-wrapper.properties</span>
<span class="t" style="left:267.5px;top:737px;font-size:15px;line-height:18px;color:#8c8c8c;letter-spacing:-0.362px;">(Gradle</span>
<svg style="left:68px;top:760px;" width="14" height="15" viewBox="0 0 14 15"><path d="M3.5 0 H10 V6 H4.6 V13 H0 V3.5 Z" fill="#8a969d"/><path d="M3.5 0 V3.5 H0 Z" fill="#3c3f41"/><path d="M3 0.2 V3 H0.2 Z" fill="#aab4ba"/><rect x="5.2" y="9.5" width="2.1" height="5.5" fill="#e8643a"/><rect x="8.1" y="7.5" width="2.1" height="7.5" fill="#f0a732"/><rect x="11" y="5.5" width="2.1" height="9.5" fill="#62b543"/></svg>
<span class="t" style="left:84px;top:759px;font-size:15px;line-height:18px;color:#bbbbbb;letter-spacing:0.360px;">local.properties</span>
<span class="t" style="left:196px;top:759px;font-size:15px;line-height:18px;color:#8c8c8c;letter-spacing:-0.301px;">(SDK Location)</span>
<svg style="left:65.8px;top:783.6px;" width="15.3" height="10.8" viewBox="0 0 17 12"><path d="M15.3 1.2 C14.2 -0.1 12.2 -0.2 11 0.9 C10.6 1.3 10.9 1.8 11.3 1.6 C12.2 0.9 13.5 1 14.2 1.9 C15 2.9 14.6 4.2 13.6 4.9 L12.6 5.6 C12 3.4 10.2 2.4 8 2.4 C4.5 2.4 1.6 3.8 0.6 7.2 C0.2 8.6 0.2 10.2 0.4 11.6 L2.6 11.6 C2.6 10.6 3 9.8 3.8 9.8 C4.6 9.8 4.9 10.6 4.9 11.6 L7.3 11.6 C7.3 10.6 7.7 9.8 8.5 9.8 C9.3 9.8 9.6 10.6 9.6 11.6 L11.6 11.6 C12.4 9.6 13 8.2 14.6 6.6 C16.2 5.1 16.5 2.7 15.3 1.2 Z" fill="#8a969d"/><circle cx="11.3" cy="4.6" r="0.7" fill="#3c3f41"/></svg>
<span class="t" style="left:84px;top:781px;font-size:15px;line-height:18px;color:#bbbbbb;letter-spacing:0.195px;">settings.gradle</span>
<span class="t" style="left:189px;top:781px;font-size:15px;line-height:18px;color:#8c8c8c;letter-spacing:0.024px;">(Project Settings)</span>
</div></div>
<div style="left:24px;top:1002px;width:224px;height:8px;background:#595b5d;"></div>
<div style="left:316px;top:91px;width:1512px;height:27px;background:#3c3f41;"></div>
<div style="left:316px;top:117px;width:1512px;height:1px;background:#323232;"></div>
<div style="left:675px;top:91px;width:169px;height:26px;background:#4e5254;"></div>
<div style="left:675px;top:115px;width:169px;height:3px;background:#4a88c7;"></div>
<svg style="left:324px;top:96px;overflow:visible;" width="16" height="16" viewBox="0 0 16 16"><circle cx="8" cy="8" r="7" fill="#3a8fb0"/><path d="M10.2 5.9 A3 3 0 1 0 10.2 10.1" fill="none" stroke="#2b3b44" stroke-width="1.3"/></svg>
<span class="t" style="left:344px;top:96px;font-size:15px;line-height:18px;color:#bbbbbb;letter-spacing:0.200px;">MainActivity.java</span>
<svg style="left:466px;top:101px;" width="8" height="8" viewBox="0 0 8 8"><path d="M0.6 0.6 L7.4 7.4 M7.4 0.6 L0.6 7.4" stroke="#6e7173" stroke-width="1"/></svg>
<svg style="left:490px;top:97px;" width="15" height="15" viewBox="0 0 15 15"><path d="M6 0 H12 V7 H2 V4 H6 Z" fill="#8a969d"/><path d="M5 0 V3 H2 Z" fill="#b4bec4"/><rect x="0" y="8" width="15" height="7" fill="#59a869"/><text x="7.5" y="14.3" font-family="Liberation Sans" font-size="7" font-weight="bold" text-anchor="middle" fill="#12351f">MF</text></svg>
<span class="t" style="left:509.5px;top:96px;font-size:15px;line-height:18px;color:#bbbbbb;letter-spacing:0.400px;">AndroidManifest.xml</span>
<svg style="left:661px;top:101px;" width="8" height="8" viewBox="0 0 8 8"><path d="M0.6 0.6 L7.4 7.4 M7.4 0.6 L0.6 7.4" stroke="#6e7173" stroke-width="1"/></svg>
<svg style="left:684px;top:97px;" width="15" height="15" viewBox="0 0 15 15"><path d="M6 0 H12 V7 H2 V4 H6 Z" fill="#8a969d"/><path d="M5 0 V3 H2 Z" fill="#b4bec4"/><rect x="0" y="8" width="15" height="7" fill="#d0582a"/><path d="M5.6 9.6 L3.4 11.5 L5.6 13.4 M9.4 9.6 L11.6 11.5 L9.4 13.4" fill="none" stroke="#4a1d0c" stroke-width="1.1"/></svg>
<span class="t" style="left:703.5px;top:96px;font-size:15px;line-height:18px;color:#bbbbbb;letter-spacing:0.194px;">activity_main.xml</span>
<svg style="left:828px;top:101px;" width="8" height="8" viewBox="0 0 8 8"><path d="M0.6 0.6 L7.4 7.4 M7.4 0.6 L0.6 7.4" stroke="#6e7173" stroke-width="1"/></svg>
<svg style="left:851.8px;top:98.6px;" width="15.3" height="10.8" viewBox="0 0 17 12"><path d="M15.3 1.2 C14.2 -0.1 12.2 -0.2 11 0.9 C10.6 1.3 10.9 1.8 11.3 1.6 C12.2 0.9 13.5 1 14.2 1.9 C15 2.9 14.6 4.2 13.6 4.9 L12.6 5.6 C12 3.4 10.2 2.4 8 2.4 C4.5 2.4 1.6 3.8 0.6 7.2 C0.2 8.6 0.2 10.2 0.4 11.6 L2.6 11.6 C2.6 10.6 3 9.8 3.8 9.8 C4.6 9.8 4.9 10.6 4.9 11.6 L7.3 11.6 C7.3 10.6 7.7 9.8 8.5 9.8 C9.3 9.8 9.6 10.6 9.6 11.6 L11.6 11.6 C12.4 9.6 13 8.2 14.6 6.6 C16.2 5.1 16.5 2.7 15.3 1.2 Z" fill="#8a969d"/><circle cx="11.3" cy="4.6" r="0.7" fill="#3c3f41"/></svg>
<span class="t" style="left:871px;top:96px;font-size:15px;line-height:18px;color:#bbbbbb;letter-spacing:0.109px;">build.gradle (:app)</span>
<svg style="left:1003px;top:101px;" width="8" height="8" viewBox="0 0 8 8"><path d="M0.6 0.6 L7.4 7.4 M7.4 0.6 L0.6 7.4" stroke="#6e7173" stroke-width="1"/></svg>
<svg style="left:1025.8px;top:98.6px;" width="15.3" height="10.8" viewBox="0 0 17 12"><path d="M15.3 1.2 C14.2 -0.1 12.2 -0.2 11 0.9 C10.6 1.3 10.9 1.8 11.3 1.6 C12.2 0.9 13.5 1 14.2 1.9 C15 2.9 14.6 4.2 13.6 4.9 L12.6 5.6 C12 3.4 10.2 2.4 8 2.4 C4.5 2.4 1.6 3.8 0.6 7.2 C0.2 8.6 0.2 10.2 0.4 11.6 L2.6 11.6 C2.6 10.6 3 9.8 3.8 9.8 C4.6 9.8 4.9 10.6 4.9 11.6 L7.3 11.6 C7.3 10.6 7.7 9.8 8.5 9.8 C9.3 9.8 9.6 10.6 9.6 11.6 L11.6 11.6 C12.4 9.6 13 8.2 14.6 6.6 C16.2 5.1 16.5 2.7 15.3 1.2 Z" fill="#8a969d"/><circle cx="11.3" cy="4.6" r="0.7" fill="#3c3f41"/></svg>
<span class="t" style="left:1045px;top:96px;font-size:15px;line-height:18px;color:#bbbbbb;letter-spacing:0.209px;">build.gradle (My Application)</span>
<svg style="left:1248px;top:101px;" width="8" height="8" viewBox="0 0 8 8"><path d="M0.6 0.6 L7.4 7.4 M7.4 0.6 L0.6 7.4" stroke="#6e7173" stroke-width="1"/></svg>
<div style="left:1813.5px;top:97.5px;width:3px;height:3px;background:#afb1b3;border-radius:1.5px;"></div>
<div style="left:1813.5px;top:102.5px;width:3px;height:3px;background:#afb1b3;border-radius:1.5px;"></div>
<div style="left:1813.5px;top:107.5px;width:3px;height:3px;background:#afb1b3;border-radius:1.5px;"></div>
<div style="left:316px;top:118px;width:1512px;height:28px;background:#3c3f41;"></div>
<div style="left:316px;top:146px;width:1512px;height:1px;background:#323232;"></div>
<svg style="left:1628px;top:126px;" width="13" height="12" viewBox="0 0 13 12"><path d="M0 1 H13 M0 4.3 H13 M0 7.6 H13 M0 11 H13" stroke="#afb1b3" stroke-width="1.5"/></svg>
<span class="t" style="left:1644.5px;top:123px;font-size:15px;line-height:18px;color:#bbbbbb;letter-spacing:-0.340px;">Code</span>
<svg style="left:1695px;top:126px;" width="13" height="12" viewBox="0 0 13 12"><path d="M0 1 H5 M0 4.3 H5 M0 7.6 H5 M0 11 H5" stroke="#afb1b3" stroke-width="1.5"/><rect x="6.5" y="0" width="6" height="12" fill="#afb1b3"/></svg>
<span class="t" style="left:1711px;top:123px;font-size:15px;line-height:18px;color:#bbbbbb;letter-spacing:0.266px;">Split</span>
<div style="left:1749px;top:121px;width:74px;height:22px;background:#53575a;border-radius:3px;"></div>
<svg style="left:1754px;top:126px;" width="13" height="12" viewBox="0 0 13 12"><rect width="13" height="12" fill="#afb1b3"/><path d="M1.5 10 L5 5.5 L7.5 8.5 L9.2 7 L11.5 10 Z" fill="#53575a"/></svg>
<span class="t" style="left:1771px;top:123px;font-size:15px;line-height:18px;color:#bbbbbb;letter-spacing:-0.281px;">Design</span>
<div style="left:316px;top:147px;width:338px;height:28px;background:#3c3f41;"></div>
<span class="t" style="left:321px;top:154px;font-size:13px;line-height:16px;color:#bbbbbb;letter-spacing:0.502px;">Palette</span>
<svg style="left:579px;top:153px;" width="16" height="16" viewBox="0 0 16 16"><circle cx="6.2" cy="6.2" r="4.6" fill="none" stroke="#afb1b3" stroke-width="1.8"/><path d="M9.6 9.6 L14 14" stroke="#afb1b3" stroke-width="2.2" stroke-linecap="round"/></svg>
<svg style="left:605px;top:153px;" width="16" height="16" viewBox="0 0 16 16"><g transform="translate(8,8) scale(0.9142857142857144)"><rect x="-1.9" y="-7" width="3.8" height="3.6" rx="0.8" transform="rotate(0)" fill="#afb1b3"/><rect x="-1.9" y="-7" width="3.8" height="3.6" rx="0.8" transform="rotate(60)" fill="#afb1b3"/><rect x="-1.9" y="-7" width="3.8" height="3.6" rx="0.8" transform="rotate(120)" fill="#afb1b3"/><rect x="-1.9" y="-7" width="3.8" height="3.6" rx="0.8" transform="rotate(180)" fill="#afb1b3"/><rect x="-1.9" y="-7" width="3.8" height="3.6" rx="0.8" transform="rotate(240)" fill="#afb1b3"/><rect x="-1.9" y="-7" width="3.8" height="3.6" rx="0.8" transform="rotate(300)" fill="#afb1b3"/><circle r="5" fill="#afb1b3"/><circle r="2.2" fill="#3c3f41"/></g></svg>
<svg style="left:632.5px;top:160px;" width="12" height="2" viewBox="0 0 12 2"><rect width="12" height="2" fill="#afb1b3"/></svg>
<div style="left:316px;top:175px;width:338px;height:388px;background:#313335;"></div>
<div style="left:432px;top:175px;width:1px;height:388px;background:#2d2f31;"></div>
<div style="left:654px;top:147px;width:1px;height:839px;background:#323232;"></div>
<div style="left:316px;top:202px;width:116px;height:26px;background:#0d293e;"></div>
<span class="t" style="left:327px;top:183px;font-size:13px;line-height:16px;color:#bbbbbb;letter-spacing:0.092px;">Common</span>
<span class="t" style="left:327px;top:209px;font-size:13px;line-height:16px;color:#c4c4c4;letter-spacing:0.539px;">Text</span>
<span class="t" style="left:327px;top:235px;font-size:13px;line-height:16px;color:#bbbbbb;letter-spacing:0.272px;">Buttons</span>
<span class="t" style="left:327px;top:261px;font-size:13px;line-height:16px;color:#bbbbbb;letter-spacing:0.219px;">Widgets</span>
<span class="t" style="left:327px;top:287px;font-size:13px;line-height:16px;color:#bbbbbb;letter-spacing:-0.007px;">Layouts</span>
<span class="t" style="left:327px;top:313px;font-size:13px;line-height:16px;color:#bbbbbb;letter-spacing:-0.039px;">Containers</span>
<span class="t" style="left:327px;top:339px;font-size:13px;line-height:16px;color:#bbbbbb;letter-spacing:0.098px;">Helpers</span>
<span class="t" style="left:327px;top:365px;font-size:13px;line-height:16px;color:#bbbbbb;letter-spacing:0.344px;">Google</span>
<span class="t" style="left:327px;top:391px;font-size:13px;line-height:16px;color:#bbbbbb;letter-spacing:-0.156px;">Legacy</span>
<div style="left:433px;top:176px;width:221px;height:22px;background:#0d293e;"></div>
<span class="t" style="left:444px;top:181px;font-size:11px;line-height:13px;color:#afb1b3;letter-spacing:0.266px;">Ab</span>
<span class="t" style="left:462.4px;top:179px;font-size:15px;line-height:18px;color:#d0d0d0;letter-spacing:0.394px;">TextView</span>
<span class="t" style="left:444px;top:202px;font-size:10px;line-height:12px;color:#afb1b3;letter-spacing:-0.117px;">Ab</span>
<div style="left:444px;top:213px;width:14px;height:2px;background:#afb1b3;"></div>
<span class="t" style="left:462.4px;top:201px;font-size:15px;line-height:18px;color:#bbbbbb;letter-spacing:0.033px;">Plain Text</span>
<span class="t" style="left:444px;top:224px;font-size:10px;line-height:12px;color:#afb1b3;letter-spacing:-0.117px;">Ab</span>
<div style="left:444px;top:235px;width:14px;height:2px;background:#afb1b3;"></div>
<span class="t" style="left:462.4px;top:223px;font-size:15px;line-height:18px;color:#bbbbbb;letter-spacing:-0.157px;">Password</span>
<span class="t" style="left:444px;top:246px;font-size:10px;line-height:12px;color:#afb1b3;letter-spacing:-0.117px;">Ab</span>
<div style="left:444px;top:257px;width:14px;height:2px;background:#afb1b3;"></div>
<span class="t" style="left:462.4px;top:245px;font-size:15px;line-height:18px;color:#bbbbbb;letter-spacing:-0.060px;">Password (Numeric)</span>
<span class="t" style="left:444px;top:268px;font-size:10px;line-height:12px;color:#afb1b3;letter-spacing:-0.117px;">Ab</span>
<div style="left:444px;top:279px;width:14px;height:2px;background:#afb1b3;"></div>
<span class="t" style="left:462.4px;top:267px;font-size:15px;line-height:18px;color:#bbbbbb;letter-spacing:-0.350px;">E-mail</span>
<span class="t" style="left:444px;top:290px;font-size:10px;line-height:12px;color:#afb1b3;letter-spacing:-0.117px;">Ab</span>
<div style="left:444px;top:301px;width:14px;height:2px;background:#afb1b3;"></div>
<span class="t" style="left:462.4px;top:289px;font-size:15px;line-height:18px;color:#bbbbbb;letter-spacing:-0.435px;">Phone</span>
<span class="t" style="left:444px;top:312px;font-size:10px;line-height:12px;color:#afb1b3;letter-spacing:-0.117px;">Ab</span>
<div style="left:444px;top:323px;width:14px;height:2px;background:#afb1b3;"></div>
<span class="t" style="left:462.4px;top:311px;font-size:15px;line-height:18px;color:#bbbbbb;letter-spacing:0.053px;">Postal Address</span>
<span class="t" style="left:444px;top:334px;font-size:10px;line-height:12px;color:#afb1b3;letter-spacing:-0.117px;">Ab</span>
<div style="left:444px;top:345px;width:14px;height:2px;background:#afb1b3;"></div>
<span class="t" style="left:462.4px;top:333px;font-size:15px;line-height:18px;color:#bbbbbb;letter-spacing:0.340px;">Multiline Text</span>
<span class="t" style="left:444px;top:356px;font-size:10px;line-height:12px;color:#afb1b3;letter-spacing:-0.117px;">Ab</span>
<div style="left:444px;top:367px;width:14px;height:2px;background:#afb1b3;"></div>
<span class="t" style="left:462.4px;top:355px;font-size:15px;line-height:18px;color:#bbbbbb;letter-spacing:-0.041px;">Time</span>
<span class="t" style="left:444px;top:378px;font-size:10px;line-height:12px;color:#afb1b3;letter-spacing:-0.117px;">Ab</span>
<div style="left:444px;top:389px;width:14px;height:2px;background:#afb1b3;"></div>
<span class="t" style="left:462.4px;top:377px;font-size:15px;line-height:18px;color:#bbbbbb;letter-spacing:-0.097px;">Date</span>
<span class="t" style="left:444px;top:400px;font-size:10px;line-height:12px;color:#afb1b3;letter-spacing:-0.117px;">Ab</span>
<div style="left:444px;top:411px;width:14px;height:2px;background:#afb1b3;"></div>
<span class="t" style="left:462.4px;top:399px;font-size:15px;line-height:18px;color:#bbbbbb;letter-spacing:0.107px;">Number</span>
<span class="t" style="left:444px;top:422px;font-size:10px;line-height:12px;color:#afb1b3;letter-spacing:-0.117px;">Ab</span>
<div style="left:444px;top:433px;width:14px;height:2px;background:#afb1b3;"></div>
<span class="t" style="left:462.4px;top:421px;font-size:15px;line-height:18px;color:#bbbbbb;letter-spacing:-0.156px;">Number (Signed)</span>
<span class="t" style="left:444px;top:444px;font-size:10px;line-height:12px;color:#afb1b3;letter-spacing:-0.117px;">Ab</span>
<div style="left:444px;top:455px;width:14px;height:2px;background:#afb1b3;"></div>
<span class="t" style="left:462.4px;top:443px;font-size:15px;line-height:18px;color:#bbbbbb;letter-spacing:-0.056px;">Number (Decimal)</span>
<span class="t" style="left:444px;top:465px;font-size:9.5px;line-height:11px;color:#afb1b3;letter-spacing:-0.312px;">Ab</span>
<svg style="left:450px;top:473px;" width="9" height="7" viewBox="0 0 9 7"><path d="M1 3 L3.5 5.5 L8 1" fill="none" stroke="#afb1b3" stroke-width="1.3"/></svg>
<span class="t" style="left:462.4px;top:465px;font-size:15px;line-height:18px;color:#bbbbbb;letter-spacing:0.334px;">AutoCompleteTextView</span>
<svg style="left:445px;top:488px;" width="14" height="14" viewBox="0 0 14 14"><path d="M0 1 H12 M0 4 H12 M0 7 H8" stroke="#afb1b3" stroke-width="1.4"/><path d="M6 9.5 L8.5 12 L13 7.5" fill="none" stroke="#afb1b3" stroke-width="1.3"/></svg>
<span class="t" style="left:462.4px;top:487px;font-size:15px;line-height:18px;color:#bbbbbb;letter-spacing:0.270px;">MultiAutoCompleteTex...</span>
<span class="t" style="left:444px;top:509px;font-size:10px;line-height:12px;color:#afb1b3;">A</span>
<svg style="left:449px;top:517px;" width="9" height="7" viewBox="0 0 9 7"><path d="M1 3 L3.5 5.5 L8 1" fill="none" stroke="#afb1b3" stroke-width="1.3"/></svg>
<span class="t" style="left:462.4px;top:509px;font-size:15px;line-height:18px;color:#bbbbbb;letter-spacing:0.043px;">CheckedTextView</span>
<span class="t" style="left:444px;top:532px;font-size:10px;line-height:12px;color:#afb1b3;letter-spacing:-0.117px;">Ab</span>
<div style="left:444px;top:543px;width:14px;height:2px;background:#afb1b3;"></div>
<span class="t" style="left:462.4px;top:531px;font-size:15px;line-height:18px;color:#bbbbbb;letter-spacing:0.284px;">TextInputLayout</span>
<div style="left:316px;top:563px;width:338px;height:8px;background:#3c3f41;"></div>
<div style="left:316px;top:570px;width:338px;height:1px;background:#323232;"></div>
<div style="left:316px;top:571px;width:338px;height:28px;background:#3c3f41;"></div>
<span class="t" style="left:321px;top:578px;font-size:13px;line-height:16px;color:#bbbbbb;letter-spacing:0.117px;">Component Tree</span>
<svg style="left:605px;top:577px;" width="16" height="16" viewBox="0 0 16 16"><g transform="translate(8,8) scale(0.9142857142857144)"><rect x="-1.9" y="-7" width="3.8" height="3.6" rx="0.8" transform="rotate(0)" fill="#afb1b3"/><rect x="-1.9" y="-7" width="3.8" height="3.6" rx="0.8" transform="rotate(60)" fill="#afb1b3"/><rect x="-1.9" y="-7" width="3.8" height="3.6" rx="0.8" transform="rotate(120)" fill="#afb1b3"/><rect x="-1.9" y="-7" width="3.8" height="3.6" rx="0.8" transform="rotate(180)" fill="#afb1b3"/><rect x="-1.9" y="-7" width="3.8" height="3.6" rx="0.8" transform="rotate(240)" fill="#afb1b3"/><rect x="-1.9" y="-7" width="3.8" height="3.6" rx="0.8" transform="rotate(300)" fill="#afb1b3"/><circle r="5" fill="#afb1b3"/><circle r="2.2" fill="#3c3f41"/></g></svg>
<svg style="left:632.5px;top:584px;" width="12" height="2" viewBox="0 0 12 2"><rect width="12" height="2" fill="#afb1b3"/></svg>
<div style="left:316px;top:599px;width:338px;height:1px;background:#323232;"></div>
<div style="left:316px;top:600px;width:338px;height:386px;background:#3c3f41;"></div>
<div style="left:633px;top:600px;width:1px;height:386px;background:#323232;"></div>
<div style="left:316px;top:618px;width:338px;height:18px;background:#0d293e;"></div>
<div style="left:633px;top:618px;width:1px;height:18px;background:#0a1f2f;"></div>
<svg style="left:321px;top:603px;" width="14" height="12" viewBox="0 0 14 12"><path d="M2 2 C8.5 2 4.5 10 11.5 10" fill="none" stroke="#afb1b3" stroke-width="1.7"/><circle cx="2.2" cy="2.2" r="2" fill="#afb1b3"/><circle cx="11.6" cy="9.8" r="2" fill="#afb1b3"/></svg>
<span class="t" style="left:339.5px;top:601px;font-size:15px;line-height:18px;color:#bbbbbb;letter-spacing:0.192px;">ConstraintLayout</span>
<span class="t" style="left:339px;top:621px;font-size:11px;line-height:13px;color:#afb1b3;letter-spacing:0.266px;">Ab</span>
<span class="t" style="left:357.4px;top:619px;font-size:15px;line-height:18px;color:#d0d0d0;letter-spacing:0.419px;">TextView</span>
<span class="t" style="left:425.5px;top:619px;font-size:15px;line-height:18px;color:#d0d0d0;letter-spacing:-0.613px;">"Hello World!"</span>
<div style="left:316px;top:986px;width:1512px;height:1px;background:#555759;"></div>
<div style="left:316px;top:987px;width:1511px;height:24px;background:#313335;"></div>
<span class="t" style="left:326px;top:990px;font-size:15px;line-height:18px;color:#bbbbbb;letter-spacing:0.308px;">androidx.constraintlayout.widget.ConstraintLayout</span>
<span class="t" style="left:683px;top:990px;font-size:15px;line-height:18px;color:#8c8c8c;">›</span>
<span class="t" style="left:697px;top:990px;font-size:15px;line-height:18px;color:#bbbbbb;letter-spacing:0.469px;">TextView</span>
<div style="left:655px;top:147px;width:892px;height:28px;background:#3c3f41;"></div>
<div style="left:655px;top:175px;width:892px;height:1px;background:#323232;"></div>
<div style="left:655px;top:176px;width:892px;height:28px;background:#3c3f41;"></div>
<div style="left:655px;top:204px;width:892px;height:1px;background:#323232;"></div>
<div style="left:1547px;top:147px;width:1px;height:839px;background:#323232;"></div>
<span class="t" style="left:668px;top:151px;font-size:15px;line-height:18px;color:#bbbbbb;letter-spacing:0.223px;">activity_main.xml</span>
<svg style="left:788.5px;top:159.5px;" width="9" height="6" viewBox="0 0 9 6"><path d="M0.9 1 L4.5 4.6 L8.1 1" fill="none" stroke="#85888a" stroke-width="1.3"/></svg>
<div style="left:806px;top:152px;width:1px;height:19px;background:#55585a;"></div>
<svg style="left:815px;top:153px;" width="17" height="17" viewBox="0 0 17 17"><path d="M8 0.5 L15.5 6 L8 11.5 L0.5 6 Z" fill="#4a9fe0"/><path d="M1.5 9.2 L8 14 L14.5 9.2" fill="none" stroke="#4a9fe0" stroke-width="1.6"/><path d="M12 14 H17 L14.5 16.8 Z" fill="#afb1b3"/></svg>
<div style="left:840px;top:152px;width:1px;height:19px;background:#55585a;"></div>
<svg style="left:847px;top:153px;" width="19" height="18" viewBox="0 0 19 18"><rect x="5.6" y="2.4" width="7" height="11.4" rx="1" fill="none" stroke="#afb1b3" stroke-width="1.3" transform="rotate(-45 9.1 8.1)"/><path d="M1.3 9.5 A7.8 7.8 0 0 1 7.5 0.5 M16.9 6.7 A7.8 7.8 0 0 1 10.7 15.7 M3 13.4 A7.8 7.8 0 0 0 6 15.4 M15.2 2.8 A7.8 7.8 0 0 0 12.2 0.8" fill="none" stroke="#afb1b3" stroke-width="1"/><path d="M13 14.5 H18 L15.5 17.3 Z" fill="#afb1b3"/></svg>
<div style="left:873px;top:152px;width:1px;height:19px;background:#55585a;"></div>
<svg style="left:881px;top:153px;" width="18" height="18" viewBox="0 0 18 18"><circle cx="7.8" cy="7.6" r="6.4" fill="#9aa7b0"/><path d="M12.6 5 A5.4 5.4 0 0 1 5.4 12.4" fill="none" stroke="#dfe3e5" stroke-width="1.3"/><path d="M12 14 H17 L14.5 16.8 Z" fill="#afb1b3"/></svg>
<div style="left:905px;top:152px;width:1px;height:19px;background:#55585a;"></div>
<svg style="left:922px;top:154px;" width="8" height="14" viewBox="0 0 8 14"><rect x="0.8" y="0.8" width="6.4" height="12.4" rx="1" fill="none" stroke="#afb1b3" stroke-width="1.6"/><rect x="1.5" y="10" width="5" height="2.5" fill="#afb1b3"/></svg>
<span class="t" style="left:936.5px;top:151px;font-size:15px;line-height:18px;color:#bbbbbb;letter-spacing:-0.100px;">Pixel</span>
<svg style="left:972.5px;top:159.5px;" width="9" height="6" viewBox="0 0 9 6"><path d="M0.9 1 L4.5 4.6 L8.1 1" fill="none" stroke="#85888a" stroke-width="1.3"/></svg>
<svg style="left:996px;top:156px;" width="14" height="10" viewBox="0 0 16 12"><path d="M1.5 11 A6.5 6.5 0 0 1 14.5 11 Z" fill="#3ddc84"/><path d="M4 5.2 L2.6 2.6 M12 5.2 L13.4 2.6" stroke="#3ddc84" stroke-width="1.1" stroke-linecap="round"/><circle cx="5.2" cy="8" r="0.8" fill="#3c3f41"/><circle cx="10.8" cy="8" r="0.8" fill="#3c3f41"/></svg>
<span class="t" style="left:1013.5px;top:151px;font-size:15px;line-height:18px;color:#bbbbbb;letter-spacing:-0.594px;">34</span>
<svg style="left:1032.5px;top:159.5px;" width="9" height="6" viewBox="0 0 9 6"><path d="M0.9 1 L4.5 4.6 L8.1 1" fill="none" stroke="#85888a" stroke-width="1.3"/></svg>
<svg style="left:1058px;top:154px;" width="14" height="14" viewBox="0 0 14 14"><circle cx="7" cy="7" r="6.2" fill="none" stroke="#afb1b3" stroke-width="1.3"/><circle cx="7" cy="7" r="3.8" fill="none" stroke="#afb1b3" stroke-width="1.1"/><path d="M7 3.2 A3.8 3.8 0 0 0 7 10.8 Z" fill="#afb1b3"/></svg>
<span class="t" style="left:1075px;top:151px;font-size:15px;line-height:18px;color:#bbbbbb;letter-spacing:0.356px;">MyApplication</span>
<svg style="left:1175.5px;top:159.5px;" width="9" height="6" viewBox="0 0 9 6"><path d="M0.9 1 L4.5 4.6 L8.1 1" fill="none" stroke="#85888a" stroke-width="1.3"/></svg>
<div style="left:1193px;top:152px;width:1px;height:19px;background:#55585a;"></div>
<svg style="left:1206px;top:154px;" width="14" height="14" viewBox="0 0 14 14"><circle cx="7" cy="7" r="6.8" fill="#afb1b3"/><path d="M2 5 C4 4 5 6 7 5 C8 4 7 2 9 1.5 M5 13 C5 11 8 11 8 9 C8 8 10 8 11 9 C12 10 12.5 9 13 8" fill="none" stroke="#3c3f41" stroke-width="1.4"/></svg>
<span class="t" style="left:1223.5px;top:151px;font-size:15px;line-height:18px;color:#bbbbbb;letter-spacing:-0.149px;">Default (en-us)</span>
<svg style="left:1332.5px;top:159.5px;" width="9" height="6" viewBox="0 0 9 6"><path d="M0.9 1 L4.5 4.6 L8.1 1" fill="none" stroke="#85888a" stroke-width="1.3"/></svg>
<svg style="left:1526px;top:155px;" width="12" height="12" viewBox="0 0 12 12"><circle cx="6" cy="6" r="6" fill="#3592c4"/><rect x="5" y="5" width="2" height="4.5" fill="#1d2b33"/><rect x="5" y="2.3" width="2" height="2" fill="#1d2b33"/></svg>
<svg style="left:1526px;top:184px;" width="12" height="12" viewBox="0 0 12 12"><circle cx="6" cy="6" r="6" fill="#3592c4"/><path d="M4.2 4.6 A1.9 1.9 0 1 1 6.6 6.4 L6 7.2 V7.8" fill="none" stroke="#1d2b33" stroke-width="1.4"/><rect x="5.3" y="8.8" width="1.5" height="1.5" fill="#1d2b33"/></svg>
<svg style="left:663px;top:184px;" width="16" height="14" viewBox="0 0 16 14"><path d="M0.3 6 C3 0.6 11 0.6 13.7 6 C11 11.4 3 11.4 0.3 6 Z" fill="#afb1b3"/><circle cx="7" cy="6" r="2.9" fill="#3c3f41"/><circle cx="7" cy="6" r="1.5" fill="#afb1b3"/><path d="M10.5 11 H15.5 L13 13.8 Z" fill="#afb1b3"/></svg>
<svg style="left:689px;top:182px;" width="15" height="16" viewBox="0 0 15 16"><path d="M2 6 V9 A5 5 0 0 0 12 9 V6" fill="none" stroke="#afb1b3" stroke-width="2.6"/><path d="M1 1 L14 15" stroke="#afb1b3" stroke-width="1.4"/><rect x="11" y="1" width="3.5" height="3.5" fill="#3592c4"/></svg>
<span class="t" style="left:718.5px;top:181px;font-size:13px;line-height:16px;color:#bbbbbb;letter-spacing:-0.401px;">0dp</span>
<svg style="left:712px;top:192px;" width="36" height="6" viewBox="0 0 36 6"><path d="M0.5 0 V5.5 H34.5 V0" fill="none" stroke="#8a8d8f" stroke-width="1"/></svg>
<div style="left:752px;top:181px;width:1px;height:19px;background:#55585a;"></div>
<svg style="left:760px;top:182px;" width="18" height="16" viewBox="0 0 18 16"><path d="M2.5 13 C8 13 5 3 11.5 3" fill="none" stroke="#afb1b3" stroke-width="1.5"/><circle cx="2.5" cy="13" r="2" fill="#afb1b3"/><circle cx="12" cy="3" r="2.2" fill="#afb1b3"/><path d="M11.5 10 L16.5 15 M16.5 10 L11.5 15" stroke="#db5860" stroke-width="1.5"/></svg>
<svg style="left:787px;top:182px;" width="17" height="16" viewBox="0 0 17 16"><path d="M1.5 14.5 L9 7" stroke="#afb1b3" stroke-width="2.6" stroke-linecap="round"/><path d="M11.5 0.5 V3 M11.5 8 V10.5 M6.5 5.5 H9 M14 5.5 H16.5 M8 2 L9.5 3.5 M15 2 L13.5 3.5 M15 9 L13.5 7.5" stroke="#3592c4" stroke-width="1.2"/></svg>
<div style="left:811px;top:181px;width:1px;height:19px;background:#55585a;"></div>
<svg style="left:819px;top:182px;" width="18" height="17" viewBox="0 0 18 17"><path d="M3 0 V5.5 M0.5 3 L3 5.5 L5.5 3 M3 15 V9.5 M0.5 12 L3 9.5 L5.5 12" fill="none" stroke="#afb1b3" stroke-width="1.5"/><rect x="8" y="1" width="7" height="4" fill="none" stroke="#afb1b3" stroke-width="1.4"/><rect x="8" y="9" width="7" height="4" fill="none" stroke="#afb1b3" stroke-width="1.4"/><path d="M12.5 14.3 H17.5 L15 17 Z" fill="#afb1b3"/></svg>
<svg style="left:846px;top:182px;" width="18" height="17" viewBox="0 0 18 17"><path d="M0.7 0 V14" stroke="#3592c4" stroke-width="1.4"/><rect x="3" y="2" width="7" height="4" fill="#afb1b3"/><rect x="3" y="8" width="11" height="4" fill="#afb1b3"/><path d="M11.5 14.3 H16.5 L14 17 Z" fill="#afb1b3"/></svg>
<svg style="left:875px;top:182px;" width="15" height="17" viewBox="0 0 15 17"><path d="M0.5 1 H9.5 M0.5 13 H9.5" stroke="#afb1b3" stroke-width="1.8"/><path d="M5 3 V12" stroke="#afb1b3" stroke-width="1.5" stroke-dasharray="1.6 1.4"/><path d="M9.5 14.3 H14.5 L12 17 Z" fill="#afb1b3"/></svg>
<div style="left:655px;top:205px;width:892px;height:781px;background:#2d2e30;"></div>
<div style="left:708px;top:267px;width:369px;height:657px;background:#fffbfe;box-shadow:0 0 3px rgba(0,0,0,0.5);"></div>
<svg style="left:655px;top:205px;" width="888" height="781" viewBox="655 205 888 781"><polyline points="893.0,272.0 889.8,273.5 896.2,276.5 889.8,279.5 896.2,282.5 889.8,285.5 896.2,288.5 889.8,291.5 896.2,294.5 889.8,297.5 896.2,300.5 889.8,303.5 896.2,306.5 889.8,309.5 896.2,312.5 889.8,315.5 896.2,318.5 889.8,321.5 896.2,324.5 889.8,327.5 896.2,330.5 889.8,333.5 896.2,336.5 889.8,339.5 896.2,342.5 889.8,345.5 896.2,348.5 889.8,351.5 896.2,354.5 889.8,357.5 896.2,360.5 889.8,363.5 896.2,366.5 889.8,369.5 896.2,372.5 889.8,375.5 896.2,378.5 889.8,381.5 896.2,384.5 889.8,387.5 896.2,390.5 889.8,393.5 896.2,396.5 889.8,399.5 896.2,402.5 889.8,405.5 896.2,408.5 889.8,411.5 896.2,414.5 889.8,417.5 896.2,420.5 889.8,423.5 896.2,426.5 889.8,429.5 896.2,432.5 889.8,435.5 896.2,438.5 889.8,441.5 896.2,444.5 889.8,447.5 896.2,450.5 889.8,453.5 896.2,456.5 889.8,459.5 896.2,462.5 889.8,465.5 896.2,468.5 889.8,471.5 896.2,474.5 889.8,477.5 896.2,480.5 889.8,483.5 896.2,486.5 889.8,489.5 896.2,492.5 889.8,495.5 896.2,498.5 889.8,501.5 896.2,504.5 889.8,507.5 896.2,510.5 889.8,513.5 896.2,516.5 889.8,519.5 896.2,522.5 889.8,525.5 896.2,528.5 889.8,531.5 896.2,534.5 889.8,537.5 896.2,540.5 889.8,543.5 896.2,546.5 889.8,549.5 896.2,552.5 889.8,555.5 896.2,558.5 889.8,561.5 896.2,564.5 889.8,567.5 896.2,570.5 889.8,573.5 893.0,577.0" fill="none" stroke="#1a86f5" stroke-width="1.4"/><polyline points="893.0,614.0 889.8,615.5 896.2,618.5 889.8,621.5 896.2,624.5 889.8,627.5 896.2,630.5 889.8,633.5 896.2,636.5 889.8,639.5 896.2,642.5 889.8,645.5 896.2,648.5 889.8,651.5 896.2,654.5 889.8,657.5 896.2,660.5 889.8,663.5 896.2,666.5 889.8,669.5 896.2,672.5 889.8,675.5 896.2,678.5 889.8,681.5 896.2,684.5 889.8,687.5 896.2,690.5 889.8,693.5 896.2,696.5 889.8,699.5 896.2,702.5 889.8,705.5 896.2,708.5 889.8,711.5 896.2,714.5 889.8,717.5 896.2,720.5 889.8,723.5 896.2,726.5 889.8,729.5 896.2,732.5 889.8,735.5 896.2,738.5 889.8,741.5 896.2,744.5 889.8,747.5 896.2,750.5 889.8,753.5 896.2,756.5 889.8,759.5 896.2,762.5 889.8,765.5 896.2,768.5 889.8,771.5 896.2,774.5 889.8,777.5 896.2,780.5 889.8,783.5 896.2,786.5 889.8,789.5 896.2,792.5 889.8,795.5 896.2,798.5 889.8,801.5 896.2,804.5 889.8,807.5 896.2,810.5 889.8,813.5 896.2,816.5 889.8,819.5 896.2,822.5 889.8,825.5 896.2,828.5 889.8,831.5 896.2,834.5 889.8,837.5 896.2,840.5 889.8,843.5 896.2,846.5 889.8,849.5 896.2,852.5 889.8,855.5 896.2,858.5 889.8,861.5 896.2,864.5 889.8,867.5 896.2,870.5 889.8,873.5 896.2,876.5 889.8,879.5 896.2,882.5 889.8,885.5 896.2,888.5 889.8,891.5 896.2,894.5 889.8,897.5 896.2,900.5 889.8,903.5 896.2,906.5 889.8,909.5 896.2,912.5 889.8,915.5 893.0,919.0" fill="none" stroke="#1a86f5" stroke-width="1.4"/><polyline points="713.0,595.5 714.5,592.3 717.5,598.7 720.5,592.3 723.5,598.7 726.5,592.3 729.5,598.7 732.5,592.3 735.5,598.7 738.5,592.3 741.5,598.7 744.5,592.3 747.5,598.7 750.5,592.3 753.5,598.7 756.5,592.3 759.5,598.7 762.5,592.3 765.5,598.7 768.5,592.3 771.5,598.7 774.5,592.3 777.5,598.7 780.5,592.3 783.5,598.7 786.5,592.3 789.5,598.7 792.5,592.3 795.5,598.7 798.5,592.3 801.5,598.7 804.5,592.3 807.5,598.7 810.5,592.3 813.5,598.7 816.5,592.3 819.5,598.7 822.5,592.3 825.5,598.7 828.5,592.3 831.5,598.7 834.5,592.3 837.5,598.7 840.5,592.3 843.5,598.7 846.5,592.3 849.5,598.7 852.0,595.5" fill="none" stroke="#1a86f5" stroke-width="1.4"/><polyline points="936.0,595.5 937.5,592.3 940.5,598.7 943.5,592.3 946.5,598.7 949.5,592.3 952.5,598.7 955.5,592.3 958.5,598.7 961.5,592.3 964.5,598.7 967.5,592.3 970.5,598.7 973.5,592.3 976.5,598.7 979.5,592.3 982.5,598.7 985.5,592.3 988.5,598.7 991.5,592.3 994.5,598.7 997.5,592.3 1000.5,598.7 1003.5,592.3 1006.5,598.7 1009.5,592.3 1012.5,598.7 1015.5,592.3 1018.5,598.7 1021.5,592.3 1024.5,598.7 1027.5,592.3 1030.5,598.7 1033.5,592.3 1036.5,598.7 1039.5,592.3 1042.5,598.7 1045.5,592.3 1048.5,598.7 1051.5,592.3 1054.5,598.7 1057.5,592.3 1060.5,598.7 1063.5,592.3 1066.5,598.7 1069.5,592.3 1072.0,595.5" fill="none" stroke="#1a86f5" stroke-width="1.4"/><path d="M707 595.5 L713 590.5 V600.5 Z M1078 595.5 L1072 590.5 V600.5 Z M893 266 L888 272 H898 Z M893 925 L888 919 H898 Z" fill="#1a86f5"/><rect x="859.5" y="587.5" width="70" height="17" fill="none" stroke="#1a86f5" stroke-width="1"/><rect x="856" y="584" width="7" height="5" fill="#1a86f5"/><rect x="926" y="584" width="7" height="5" fill="#1a86f5"/><rect x="856" y="602" width="7" height="5" fill="#1a86f5"/><rect x="926" y="602" width="7" height="5" fill="#1a86f5"/><circle cx="893" cy="583.5" r="6.8" fill="#fffbfe"/><circle cx="893" cy="583.5" r="5.6" fill="#1a86f5"/><circle cx="893" cy="608" r="6.8" fill="#fffbfe"/><circle cx="893" cy="608" r="5.6" fill="#1a86f5"/><circle cx="859" cy="595.5" r="6.8" fill="#fffbfe"/><circle cx="859" cy="595.5" r="5.6" fill="#1a86f5"/><circle cx="929" cy="595.5" r="6.8" fill="#fffbfe"/><circle cx="929" cy="595.5" r="5.6" fill="#1a86f5"/></svg>
<span class="t" style="left:867.5px;top:589px;font-size:13px;line-height:16px;color:#444444;letter-spacing:-0.258px;">ello World</span>
<svg style="left:921px;top:587px;" width="16" height="17" viewBox="0 0 16 17"><circle cx="8" cy="8.5" r="6.8" fill="#fffbfe"/><circle cx="8" cy="8.5" r="5.6" fill="#1a86f5"/></svg>
<div style="left:1125px;top:267px;width:371px;height:659px;background:#235b6f;box-sizing:border-box;border:1px solid #4f9bb8;box-shadow:0 0 3px 1px rgba(0,0,0,0.55), inset 0 0 1px 1px rgba(20,50,62,0.6);"></div>
<div style="left:1125px;top:267px;width:371px;height:659px;background:transparent;box-sizing:border-box;border:1px dashed #a6e2f6;"></div>
<svg style="left:655px;top:205px;" width="888" height="781" viewBox="655 205 888 781"><polyline points="1310.5,272.0 1307.1,273.5 1313.9,276.5 1307.1,279.5 1313.9,282.5 1307.1,285.5 1313.9,288.5 1307.1,291.5 1313.9,294.5 1307.1,297.5 1313.9,300.5 1307.1,303.5 1313.9,306.5 1307.1,309.5 1313.9,312.5 1307.1,315.5 1313.9,318.5 1307.1,321.5 1313.9,324.5 1307.1,327.5 1313.9,330.5 1307.1,333.5 1313.9,336.5 1307.1,339.5 1313.9,342.5 1307.1,345.5 1313.9,348.5 1307.1,351.5 1313.9,354.5 1307.1,357.5 1313.9,360.5 1307.1,363.5 1313.9,366.5 1307.1,369.5 1313.9,372.5 1307.1,375.5 1313.9,378.5 1307.1,381.5 1313.9,384.5 1307.1,387.5 1313.9,390.5 1307.1,393.5 1313.9,396.5 1307.1,399.5 1313.9,402.5 1307.1,405.5 1313.9,408.5 1307.1,411.5 1313.9,414.5 1307.1,417.5 1313.9,420.5 1307.1,423.5 1313.9,426.5 1307.1,429.5 1313.9,432.5 1307.1,435.5 1313.9,438.5 1307.1,441.5 1313.9,444.5 1307.1,447.5 1313.9,450.5 1307.1,453.5 1313.9,456.5 1307.1,459.5 1313.9,462.5 1307.1,465.5 1313.9,468.5 1307.1,471.5 1313.9,474.5 1307.1,477.5 1313.9,480.5 1307.1,483.5 1313.9,486.5 1307.1,489.5 1313.9,492.5 1307.1,495.5 1313.9,498.5 1307.1,501.5 1313.9,504.5 1307.1,507.5 1313.9,510.5 1307.1,513.5 1313.9,516.5 1307.1,519.5 1313.9,522.5 1307.1,525.5 1313.9,528.5 1307.1,531.5 1313.9,534.5 1307.1,537.5 1313.9,540.5 1307.1,543.5 1313.9,546.5 1307.1,549.5 1313.9,552.5 1307.1,555.5 1313.9,558.5 1307.1,561.5 1313.9,564.5 1307.1,567.5 1313.9,570.5 1307.1,573.5 1310.5,577.0" fill="none" stroke="#16404f" stroke-width="2.2"/><polyline points="1310.5,614.0 1307.1,615.5 1313.9,618.5 1307.1,621.5 1313.9,624.5 1307.1,627.5 1313.9,630.5 1307.1,633.5 1313.9,636.5 1307.1,639.5 1313.9,642.5 1307.1,645.5 1313.9,648.5 1307.1,651.5 1313.9,654.5 1307.1,657.5 1313.9,660.5 1307.1,663.5 1313.9,666.5 1307.1,669.5 1313.9,672.5 1307.1,675.5 1313.9,678.5 1307.1,681.5 1313.9,684.5 1307.1,687.5 1313.9,690.5 1307.1,693.5 1313.9,696.5 1307.1,699.5 1313.9,702.5 1307.1,705.5 1313.9,708.5 1307.1,711.5 1313.9,714.5 1307.1,717.5 1313.9,720.5 1307.1,723.5 1313.9,726.5 1307.1,729.5 1313.9,732.5 1307.1,735.5 1313.9,738.5 1307.1,741.5 1313.9,744.5 1307.1,747.5 1313.9,750.5 1307.1,753.5 1313.9,756.5 1307.1,759.5 1313.9,762.5 1307.1,765.5 1313.9,768.5 1307.1,771.5 1313.9,774.5 1307.1,777.5 1313.9,780.5 1307.1,783.5 1313.9,786.5 1307.1,789.5 1313.9,792.5 1307.1,795.5 1313.9,798.5 1307.1,801.5 1313.9,804.5 1307.1,807.5 1313.9,810.5 1307.1,813.5 1313.9,816.5 1307.1,819.5 1313.9,822.5 1307.1,825.5 1313.9,828.5 1307.1,831.5 1313.9,834.5 1307.1,837.5 1313.9,840.5 1307.1,843.5 1313.9,846.5 1307.1,849.5 1313.9,852.5 1307.1,855.5 1313.9,858.5 1307.1,861.5 1313.9,864.5 1307.1,867.5 1313.9,870.5 1307.1,873.5 1313.9,876.5 1307.1,879.5 1313.9,882.5 1307.1,885.5 1313.9,888.5 1307.1,891.5 1313.9,894.5 1307.1,897.5 1313.9,900.5 1307.1,903.5 1313.9,906.5 1307.1,909.5 1313.9,912.5 1307.1,915.5 1310.5,919.0" fill="none" stroke="#16404f" stroke-width="2.2"/><polyline points="1131.0,595.5 1132.5,592.1 1135.5,598.9 1138.5,592.1 1141.5,598.9 1144.5,592.1 1147.5,598.9 1150.5,592.1 1153.5,598.9 1156.5,592.1 1159.5,598.9 1162.5,592.1 1165.5,598.9 1168.5,592.1 1171.5,598.9 1174.5,592.1 1177.5,598.9 1180.5,592.1 1183.5,598.9 1186.5,592.1 1189.5,598.9 1192.5,592.1 1195.5,598.9 1198.5,592.1 1201.5,598.9 1204.5,592.1 1207.5,598.9 1210.5,592.1 1213.5,598.9 1216.5,592.1 1219.5,598.9 1222.5,592.1 1225.5,598.9 1228.5,592.1 1231.5,598.9 1234.5,592.1 1237.5,598.9 1240.5,592.1 1243.5,598.9 1246.5,592.1 1249.5,598.9 1252.5,592.1 1255.5,598.9 1258.5,592.1 1261.5,598.9 1264.5,592.1 1269.0,595.5" fill="none" stroke="#16404f" stroke-width="2.2"/><polyline points="1353.0,595.5 1354.5,592.1 1357.5,598.9 1360.5,592.1 1363.5,598.9 1366.5,592.1 1369.5,598.9 1372.5,592.1 1375.5,598.9 1378.5,592.1 1381.5,598.9 1384.5,592.1 1387.5,598.9 1390.5,592.1 1393.5,598.9 1396.5,592.1 1399.5,598.9 1402.5,592.1 1405.5,598.9 1408.5,592.1 1411.5,598.9 1414.5,592.1 1417.5,598.9 1420.5,592.1 1423.5,598.9 1426.5,592.1 1429.5,598.9 1432.5,592.1 1435.5,598.9 1438.5,592.1 1441.5,598.9 1444.5,592.1 1447.5,598.9 1450.5,592.1 1453.5,598.9 1456.5,592.1 1459.5,598.9 1462.5,592.1 1465.5,598.9 1468.5,592.1 1471.5,598.9 1474.5,592.1 1477.5,598.9 1480.5,592.1 1483.5,598.9 1486.5,592.1 1490.0,595.5" fill="none" stroke="#16404f" stroke-width="2.2"/><polyline points="1310.5,272.0 1307.1,273.5 1313.9,276.5 1307.1,279.5 1313.9,282.5 1307.1,285.5 1313.9,288.5 1307.1,291.5 1313.9,294.5 1307.1,297.5 1313.9,300.5 1307.1,303.5 1313.9,306.5 1307.1,309.5 1313.9,312.5 1307.1,315.5 1313.9,318.5 1307.1,321.5 1313.9,324.5 1307.1,327.5 1313.9,330.5 1307.1,333.5 1313.9,336.5 1307.1,339.5 1313.9,342.5 1307.1,345.5 1313.9,348.5 1307.1,351.5 1313.9,354.5 1307.1,357.5 1313.9,360.5 1307.1,363.5 1313.9,366.5 1307.1,369.5 1313.9,372.5 1307.1,375.5 1313.9,378.5 1307.1,381.5 1313.9,384.5 1307.1,387.5 1313.9,390.5 1307.1,393.5 1313.9,396.5 1307.1,399.5 1313.9,402.5 1307.1,405.5 1313.9,408.5 1307.1,411.5 1313.9,414.5 1307.1,417.5 1313.9,420.5 1307.1,423.5 1313.9,426.5 1307.1,429.5 1313.9,432.5 1307.1,435.5 1313.9,438.5 1307.1,441.5 1313.9,444.5 1307.1,447.5 1313.9,450.5 1307.1,453.5 1313.9,456.5 1307.1,459.5 1313.9,462.5 1307.1,465.5 1313.9,468.5 1307.1,471.5 1313.9,474.5 1307.1,477.5 1313.9,480.5 1307.1,483.5 1313.9,486.5 1307.1,489.5 1313.9,492.5 1307.1,495.5 1313.9,498.5 1307.1,501.5 1313.9,504.5 1307.1,507.5 1313.9,510.5 1307.1,513.5 1313.9,516.5 1307.1,519.5 1313.9,522.5 1307.1,525.5 1313.9,528.5 1307.1,531.5 1313.9,534.5 1307.1,537.5 1313.9,540.5 1307.1,543.5 1313.9,546.5 1307.1,549.5 1313.9,552.5 1307.1,555.5 1313.9,558.5 1307.1,561.5 1313.9,564.5 1307.1,567.5 1313.9,570.5 1307.1,573.5 1310.5,577.0" fill="none" stroke="#ffffff" stroke-width="1.1"/><polyline points="1310.5,614.0 1307.1,615.5 1313.9,618.5 1307.1,621.5 1313.9,624.5 1307.1,627.5 1313.9,630.5 1307.1,633.5 1313.9,636.5 1307.1,639.5 1313.9,642.5 1307.1,645.5 1313.9,648.5 1307.1,651.5 1313.9,654.5 1307.1,657.5 1313.9,660.5 1307.1,663.5 1313.9,666.5 1307.1,669.5 1313.9,672.5 1307.1,675.5 1313.9,678.5 1307.1,681.5 1313.9,684.5 1307.1,687.5 1313.9,690.5 1307.1,693.5 1313.9,696.5 1307.1,699.5 1313.9,702.5 1307.1,705.5 1313.9,708.5 1307.1,711.5 1313.9,714.5 1307.1,717.5 1313.9,720.5 1307.1,723.5 1313.9,726.5 1307.1,729.5 1313.9,732.5 1307.1,735.5 1313.9,738.5 1307.1,741.5 1313.9,744.5 1307.1,747.5 1313.9,750.5 1307.1,753.5 1313.9,756.5 1307.1,759.5 1313.9,762.5 1307.1,765.5 1313.9,768.5 1307.1,771.5 1313.9,774.5 1307.1,777.5 1313.9,780.5 1307.1,783.5 1313.9,786.5 1307.1,789.5 1313.9,792.5 1307.1,795.5 1313.9,798.5 1307.1,801.5 1313.9,804.5 1307.1,807.5 1313.9,810.5 1307.1,813.5 1313.9,816.5 1307.1,819.5 1313.9,822.5 1307.1,825.5 1313.9,828.5 1307.1,831.5 1313.9,834.5 1307.1,837.5 1313.9,840.5 1307.1,843.5 1313.9,846.5 1307.1,849.5 1313.9,852.5 1307.1,855.5 1313.9,858.5 1307.1,861.5 1313.9,864.5 1307.1,867.5 1313.9,870.5 1307.1,873.5 1313.9,876.5 1307.1,879.5 1313.9,882.5 1307.1,885.5 1313.9,888.5 1307.1,891.5 1313.9,894.5 1307.1,897.5 1313.9,900.5 1307.1,903.5 1313.9,906.5 1307.1,909.5 1313.9,912.5 1307.1,915.5 1310.5,919.0" fill="none" stroke="#ffffff" stroke-width="1.1"/><polyline points="1131.0,595.5 1132.5,592.1 1135.5,598.9 1138.5,592.1 1141.5,598.9 1144.5,592.1 1147.5,598.9 1150.5,592.1 1153.5,598.9 1156.5,592.1 1159.5,598.9 1162.5,592.1 1165.5,598.9 1168.5,592.1 1171.5,598.9 1174.5,592.1 1177.5,598.9 1180.5,592.1 1183.5,598.9 1186.5,592.1 1189.5,598.9 1192.5,592.1 1195.5,598.9 1198.5,592.1 1201.5,598.9 1204.5,592.1 1207.5,598.9 1210.5,592.1 1213.5,598.9 1216.5,592.1 1219.5,598.9 1222.5,592.1 1225.5,598.9 1228.5,592.1 1231.5,598.9 1234.5,592.1 1237.5,598.9 1240.5,592.1 1243.5,598.9 1246.5,592.1 1249.5,598.9 1252.5,592.1 1255.5,598.9 1258.5,592.1 1261.5,598.9 1264.5,592.1 1269.0,595.5" fill="none" stroke="#ffffff" stroke-width="1.1"/><polyline points="1353.0,595.5 1354.5,592.1 1357.5,598.9 1360.5,592.1 1363.5,598.9 1366.5,592.1 1369.5,598.9 1372.5,592.1 1375.5,598.9 1378.5,592.1 1381.5,598.9 1384.5,592.1 1387.5,598.9 1390.5,592.1 1393.5,598.9 1396.5,592.1 1399.5,598.9 1402.5,592.1 1405.5,598.9 1408.5,592.1 1411.5,598.9 1414.5,592.1 1417.5,598.9 1420.5,592.1 1423.5,598.9 1426.5,592.1 1429.5,598.9 1432.5,592.1 1435.5,598.9 1438.5,592.1 1441.5,598.9 1444.5,592.1 1447.5,598.9 1450.5,592.1 1453.5,598.9 1456.5,592.1 1459.5,598.9 1462.5,592.1 1465.5,598.9 1468.5,592.1 1471.5,598.9 1474.5,592.1 1477.5,598.9 1480.5,592.1 1483.5,598.9 1486.5,592.1 1490.0,595.5" fill="none" stroke="#ffffff" stroke-width="1.1"/><path d="M1126 595.5 L1132 590.5 V600.5 Z M1495 595.5 L1489 590.5 V600.5 Z M1310.5 268 L1305.5 274 H1315.5 Z M1310.5 925 L1305.5 919 H1315.5 Z" fill="#ffffff"/><rect x="1276.5" y="587.5" width="69" height="17" fill="#4a8ba3" stroke="#e8f8ff" stroke-width="1"/><path d="M1283 599 H1301 M1292 599 V604" stroke="#7ccbe6" stroke-width="1.8" fill="none"/><rect x="1273" y="584" width="7" height="5" fill="#e8f8ff" stroke="#16404f" stroke-width="0.6"/><rect x="1343" y="584" width="7" height="5" fill="#e8f8ff" stroke="#16404f" stroke-width="0.6"/><rect x="1273" y="602" width="7" height="5" fill="#e8f8ff" stroke="#16404f" stroke-width="0.6"/><rect x="1343" y="602" width="7" height="5" fill="#e8f8ff" stroke="#16404f" stroke-width="0.6"/><circle cx="1310.5" cy="583.5" r="6.3" fill="#e8f8ff" stroke="#16404f" stroke-width="1"/><circle cx="1310.5" cy="608" r="6.3" fill="#e8f8ff" stroke="#16404f" stroke-width="1"/><circle cx="1276" cy="595.5" r="6.3" fill="#e8f8ff" stroke="#16404f" stroke-width="1"/><circle cx="1346" cy="595.5" r="6.3" fill="#e8f8ff" stroke="#16404f" stroke-width="1"/></svg>
<svg style="left:1080px;top:927px;" width="20" height="20" viewBox="0 0 20 20"><path d="M1 18 L18 1 M9 18 L18 9" stroke="#8a8d8f" stroke-width="1"/></svg>
<div style="left:1502px;top:823px;width:28px;height:29px;background:#2b2c2e;box-sizing:border-box;border:1px solid #3d3f42;border-radius:4px;"></div>
<div style="left:1502px;top:857px;width:28px;height:108px;background:#2b2c2e;box-sizing:border-box;border:1px solid #3d3f42;border-radius:4px;"></div>
<svg style="left:1509px;top:830px;" width="14" height="15" viewBox="0 0 14 15"><rect x="3.6" y="2.2" width="2.1" height="8" rx="1" fill="#cfcfcf"/><rect x="6" y="0.8" width="2.1" height="9" rx="1" fill="#cfcfcf"/><rect x="8.4" y="1.2" width="2.1" height="9" rx="1" fill="#cfcfcf"/><rect x="10.8" y="2.8" width="2" height="8" rx="1" fill="#cfcfcf"/><path d="M3.6 7.5 H12.8 V11 C12.8 13.5 11.5 14.5 9.5 14.5 H7.5 C6 14.5 5 13.8 4.2 12.8 L0.7 8.6 C0.2 7.8 1.2 6.9 2 7.6 L3.6 9.2 Z" fill="#cfcfcf"/></svg>
<svg style="left:1510px;top:866px;" width="12" height="12" viewBox="0 0 12 12"><path d="M6 0.5 V11.5 M0.5 6 H11.5" stroke="#d0d0d0" stroke-width="1.8"/></svg>
<div style="left:1510px;top:897px;width:11px;height:2px;background:#d0d0d0;"></div>
<span class="t" style="left:1509.5px;top:917px;font-size:12px;line-height:14px;color:#d0d0d0;font-weight:bold;transform:scaleX(0.7);transform-origin:0 0;">1:1</span>
<svg style="left:1509px;top:944px;" width="14" height="12" viewBox="0 0 14 12"><rect x="0.8" y="0.8" width="12.4" height="10.4" fill="none" stroke="#d0d0d0" stroke-width="1.5"/><path d="M3.4 5.6 V3.4 H5.8 M10.6 6.4 V8.6 H8.2" fill="none" stroke="#d0d0d0" stroke-width="1.1"/></svg>
<div style="left:1548px;top:147px;width:280px;height:28px;background:#3c3f41;"></div>
<span class="t" style="left:1553.5px;top:154px;font-size:13px;line-height:16px;color:#bbbbbb;letter-spacing:0.408px;">Attributes</span>
<svg style="left:1752px;top:153px;" width="16" height="16" viewBox="0 0 16 16"><circle cx="6.2" cy="6.2" r="4.6" fill="none" stroke="#afb1b3" stroke-width="1.8"/><path d="M9.6 9.6 L14 14" stroke="#afb1b3" stroke-width="2.2" stroke-linecap="round"/></svg>
<svg style="left:1778px;top:153px;" width="16" height="16" viewBox="0 0 16 16"><g transform="translate(8,8) scale(0.9142857142857144)"><rect x="-1.9" y="-7" width="3.8" height="3.6" rx="0.8" transform="rotate(0)" fill="#afb1b3"/><rect x="-1.9" y="-7" width="3.8" height="3.6" rx="0.8" transform="rotate(60)" fill="#afb1b3"/><rect x="-1.9" y="-7" width="3.8" height="3.6" rx="0.8" transform="rotate(120)" fill="#afb1b3"/><rect x="-1.9" y="-7" width="3.8" height="3.6" rx="0.8" transform="rotate(180)" fill="#afb1b3"/><rect x="-1.9" y="-7" width="3.8" height="3.6" rx="0.8" transform="rotate(240)" fill="#afb1b3"/><rect x="-1.9" y="-7" width="3.8" height="3.6" rx="0.8" transform="rotate(300)" fill="#afb1b3"/><circle r="5" fill="#afb1b3"/><circle r="2.2" fill="#3c3f41"/></g></svg>
<svg style="left:1806.0px;top:160px;" width="12" height="2" viewBox="0 0 12 2"><rect width="12" height="2" fill="#afb1b3"/></svg>
<div style="left:1548px;top:175px;width:280px;height:811px;background:#313335;"></div>
<div style="left:1818px;top:203px;width:8px;height:532px;background:#4f5355;"></div>
<span class="t" style="left:1552px;top:183px;font-size:11px;line-height:13px;color:#bbbbbb;font-weight:bold;letter-spacing:-0.578px;">Ab</span>
<span class="t" style="left:1571px;top:180px;font-size:15px;line-height:18px;color:#8c8c8c;letter-spacing:0.406px;">TextView</span>
<span class="t" style="left:1747px;top:180px;font-size:15px;line-height:18px;color:#bbbbbb;letter-spacing:-0.399px;">&lt;unnamed&gt;</span>
<span class="t" style="left:1556px;top:211px;font-size:13px;line-height:16px;color:#bbbbbb;letter-spacing:0.188px;">id</span>
<div style="left:1657px;top:209px;width:139px;height:18px;background:#313335;box-sizing:border-box;border:1px solid #646464;"></div>
<div style="left:1548px;top:234px;width:265px;height:26px;background:#3c3f41;"></div>
<svg style="left:1554.5px;top:241.5px;" width="7" height="11" viewBox="0 0 7 11"><path d="M1 1 L5.2 5.5 L1 10" fill="none" stroke="#afb1b3" stroke-width="1.2"/></svg>
<span class="t" style="left:1565.5px;top:238px;font-size:15px;line-height:18px;color:#bbbbbb;font-weight:bold;letter-spacing:0.351px;">Declared Attributes</span>
<svg style="left:1774px;top:242px;" width="10" height="10" viewBox="0 0 10 10"><path d="M5 0 V10 M0 5 H10" stroke="#afb1b3" stroke-width="1.6"/></svg>
<div style="left:1796px;top:246px;width:10px;height:2px;background:#afb1b3;"></div>
<div style="left:1548px;top:262px;width:265px;height:25px;background:#3c3f41;"></div>
<svg style="left:1553.5px;top:271.5px;" width="11" height="7" viewBox="0 0 11 7"><path d="M1 1 L5.5 5.2 L10 1" fill="none" stroke="#afb1b3" stroke-width="1.2"/></svg>
<span class="t" style="left:1567.5px;top:265px;font-size:15px;line-height:18px;color:#bbbbbb;font-weight:bold;letter-spacing:-0.193px;">Layout</span>
<span class="t" style="left:1556px;top:292px;font-size:15px;line-height:18px;color:#bbbbbb;letter-spacing:0.222px;">Constraint Widget</span>
<div style="left:1650px;top:335px;width:60px;height:19px;background:#45494a;box-sizing:border-box;border:1px solid #646464;border-radius:2px;"></div>
<div style="left:1687px;top:336px;width:1px;height:17px;background:#646464;"></div>
<svg style="left:1695.0px;top:342.5px;" width="8" height="5" viewBox="0 0 8 5"><path d="M0 0 L8 0 L4.0 5 Z" fill="#afb1b3"/></svg>
<span class="t" style="left:1656.5px;top:338px;font-size:13px;line-height:16px;color:#bbbbbb;">0</span>
<div style="left:1575px;top:390px;width:60px;height:18px;background:#45494a;box-sizing:border-box;border:1px solid #646464;border-radius:2px;"></div>
<div style="left:1612px;top:391px;width:1px;height:16px;background:#646464;"></div>
<svg style="left:1620.0px;top:397.0px;" width="8" height="5" viewBox="0 0 8 5"><path d="M0 0 L8 0 L4.0 5 Z" fill="#afb1b3"/></svg>
<span class="t" style="left:1581.5px;top:392px;font-size:13px;line-height:16px;color:#bbbbbb;">0</span>
<div style="left:1725px;top:390px;width:60px;height:18px;background:#45494a;box-sizing:border-box;border:1px solid #646464;border-radius:2px;"></div>
<div style="left:1762px;top:391px;width:1px;height:16px;background:#646464;"></div>
<svg style="left:1770.0px;top:397.0px;" width="8" height="5" viewBox="0 0 8 5"><path d="M0 0 L8 0 L4.0 5 Z" fill="#afb1b3"/></svg>
<span class="t" style="left:1731.5px;top:392px;font-size:13px;line-height:16px;color:#bbbbbb;">0</span>
<div style="left:1650px;top:444px;width:60px;height:19px;background:#45494a;box-sizing:border-box;border:1px solid #646464;border-radius:2px;"></div>
<div style="left:1687px;top:445px;width:1px;height:17px;background:#646464;"></div>
<svg style="left:1695.0px;top:451.5px;" width="8" height="5" viewBox="0 0 8 5"><path d="M0 0 L8 0 L4.0 5 Z" fill="#afb1b3"/></svg>
<span class="t" style="left:1656.5px;top:447px;font-size:13px;line-height:16px;color:#bbbbbb;">0</span>
<svg style="left:1548px;top:330px;" width="270" height="160" viewBox="1548 330 270 160"><rect x="1650.5" y="369.5" width="60" height="60" fill="none" stroke="#808284" stroke-width="1"/><path d="M1680 357 V369 M1680 430 V441 M1638 399 H1650 M1711 399 H1722" stroke="#808284" stroke-width="1.6"/><circle cx="1680" cy="369.5" r="5" fill="#808284"/><circle cx="1680" cy="429.5" r="5" fill="#808284"/><circle cx="1650.5" cy="399" r="5" fill="#808284"/><circle cx="1710.5" cy="399" r="5" fill="#808284"/><path d="M1675 379 L1680 382.5 L1685 379 M1675 384 L1680 387.5 L1685 384" fill="none" stroke="#808284" stroke-width="1"/><path d="M1675 415 L1680 411.5 L1685 415 M1675 420 L1680 416.5 L1685 420" fill="none" stroke="#808284" stroke-width="1"/><path d="M1659.5 394 L1663 399 L1659.5 404 M1664.5 394 L1668 399 L1664.5 404" fill="none" stroke="#808284" stroke-width="1"/><path d="M1700.5 394 L1697 399 L1700.5 404 M1695.5 394 L1692 399 L1695.5 404" fill="none" stroke="#808284" stroke-width="1"/><rect x="1561" y="348" width="5" height="102" rx="2" fill="#27282a"/><rect x="1629" y="473" width="102" height="5" rx="2" fill="#27282a"/><circle cx="1563.5" cy="399" r="8.6" fill="#55585a" stroke="#808284" stroke-width="1"/><circle cx="1680" cy="475.5" r="8.6" fill="#55585a" stroke="#808284" stroke-width="1"/></svg>
<span class="t" style="left:1557px;top:393px;font-size:11px;line-height:13px;color:#8c8e90;letter-spacing:0.375px;">50</span>
<span class="t" style="left:1673.5px;top:470px;font-size:11px;line-height:13px;color:#8c8e90;letter-spacing:0.375px;">50</span>
<svg style="left:1556.5px;top:511.0px;" width="7" height="11" viewBox="0 0 7 11"><path d="M1 1 L5.2 5.5 L1 10" fill="none" stroke="#afb1b3" stroke-width="1.2"/></svg>
<span class="t" style="left:1569.5px;top:508px;font-size:15px;line-height:18px;color:#bbbbbb;letter-spacing:0.057px;">Constraints</span>
<span class="t" style="left:1651px;top:508px;font-size:15px;line-height:18px;color:#9a9a9a;letter-spacing:-0.448px;">(4)</span>
<div style="left:1552px;top:532px;width:257px;height:1px;background:#505254;"></div>
<span class="t" style="left:1556px;top:543px;font-size:13px;line-height:16px;color:#bbbbbb;letter-spacing:0.309px;">layout_width</span>
<div style="left:1657px;top:541px;width:139px;height:18px;background:#313335;box-sizing:border-box;border:1px solid #646464;border-radius:2px;"></div>
<div style="left:1773px;top:542px;width:1px;height:16px;background:#646464;"></div>
<svg style="left:1781.0px;top:548.0px;" width="8" height="5" viewBox="0 0 8 5"><path d="M0 0 L8 0 L4.0 5 Z" fill="#afb1b3"/></svg>
<span class="t" style="left:1663.5px;top:541px;font-size:15px;line-height:18px;color:#bbbbbb;letter-spacing:0.202px;">wrap_content</span>
<div style="left:1802px;top:542px;width:5px;height:16px;background:transparent;box-sizing:border-box;border:1px solid #5a5d5f;border-radius:2px;"></div>
<span class="t" style="left:1556px;top:567px;font-size:13px;line-height:16px;color:#bbbbbb;letter-spacing:0.202px;">layout_height</span>
<div style="left:1657px;top:565px;width:139px;height:18px;background:#313335;box-sizing:border-box;border:1px solid #646464;border-radius:2px;"></div>
<div style="left:1773px;top:566px;width:1px;height:16px;background:#646464;"></div>
<svg style="left:1781.0px;top:572.0px;" width="8" height="5" viewBox="0 0 8 5"><path d="M0 0 L8 0 L4.0 5 Z" fill="#afb1b3"/></svg>
<span class="t" style="left:1663.5px;top:565px;font-size:15px;line-height:18px;color:#bbbbbb;letter-spacing:0.202px;">wrap_content</span>
<div style="left:1802px;top:566px;width:5px;height:16px;background:transparent;box-sizing:border-box;border:1px solid #5a5d5f;border-radius:2px;"></div>
<span class="t" style="left:1556px;top:591px;font-size:13px;line-height:16px;color:#bbbbbb;letter-spacing:0.320px;">visibility</span>
<div style="left:1657px;top:589px;width:139px;height:18px;background:#313335;box-sizing:border-box;border:1px solid #646464;border-radius:2px;"></div>
<div style="left:1773px;top:590px;width:1px;height:16px;background:#646464;"></div>
<svg style="left:1781.0px;top:596.0px;" width="8" height="5" viewBox="0 0 8 5"><path d="M0 0 L8 0 L4.0 5 Z" fill="#afb1b3"/></svg>
<svg style="left:1555px;top:617px;" width="10" height="10" viewBox="0 0 10 10"><path d="M1 9 L5 5" stroke="#afb1b3" stroke-width="2.2" stroke-linecap="round"/><path d="M9.6 2.4 L7.6 4.4 L5.8 2.6 L7.8 0.6 A3 3 0 1 0 9.6 2.4 Z" fill="#afb1b3"/></svg>
<span class="t" style="left:1568px;top:615px;font-size:13px;line-height:16px;color:#bbbbbb;letter-spacing:0.370px;">visibility</span>
<div style="left:1657px;top:613px;width:139px;height:18px;background:#313335;box-sizing:border-box;border:1px solid #646464;border-radius:2px;"></div>
<div style="left:1773px;top:614px;width:1px;height:16px;background:#646464;"></div>
<svg style="left:1781.0px;top:620.0px;" width="8" height="5" viewBox="0 0 8 5"><path d="M0 0 L8 0 L4.0 5 Z" fill="#afb1b3"/></svg>
<div style="left:1548px;top:638px;width:265px;height:26px;background:#3c3f41;"></div>
<svg style="left:1553.5px;top:647.5px;" width="11" height="7" viewBox="0 0 11 7"><path d="M1 1 L5.5 5.2 L10 1" fill="none" stroke="#afb1b3" stroke-width="1.2"/></svg>
<span class="t" style="left:1567.5px;top:642px;font-size:15px;line-height:18px;color:#bbbbbb;font-weight:bold;letter-spacing:-0.220px;">Transforms</span>
<div style="left:1622px;top:708px;width:118px;height:93px;background:transparent;box-sizing:border-box;border:1px solid #2aa24a;"></div>
<div style="left:1625px;top:711px;width:112px;height:87px;background:transparent;box-sizing:border-box;border:1px solid #2aa24a;"></div>
<span class="t" style="left:1643px;top:727px;font-size:33px;line-height:44px;letter-spacing:0.3px;color:transparent;-webkit-text-stroke:1px #2aa24a;">View</span>
<span class="t" style="left:1558.5px;top:849px;font-size:15px;line-height:18px;color:#bbbbbb;letter-spacing:0.328px;">Rotation</span>
<span class="t" style="left:1578px;top:871px;font-size:13px;line-height:16px;color:#bbbbbb;">x</span>
<div style="left:1596px;top:877.0px;width:166px;height:3px;background:#6a6d6f;border-radius:1px;"></div>
<svg style="left:1672px;top:870.5px;" width="16" height="17" viewBox="0 0 16 17"><path d="M1 0.5 H15 V9.5 L8 16.5 L1 9.5 Z" fill="#9fa2a4"/></svg>
<span class="t" style="left:1772.5px;top:872px;font-size:13px;line-height:16px;color:#bbbbbb;">0</span>
<span class="t" style="left:1578px;top:895px;font-size:13px;line-height:16px;color:#bbbbbb;">y</span>
<div style="left:1596px;top:901.0px;width:166px;height:3px;background:#6a6d6f;border-radius:1px;"></div>
<svg style="left:1671px;top:894.5px;" width="16" height="17" viewBox="0 0 16 17"><path d="M1 0.5 H15 V9.5 L8 16.5 L1 9.5 Z" fill="#9fa2a4"/></svg>
<span class="t" style="left:1772.5px;top:896px;font-size:13px;line-height:16px;color:#bbbbbb;">0</span>
<span class="t" style="left:1578px;top:919px;font-size:13px;line-height:16px;color:#bbbbbb;">z</span>
<div style="left:1596px;top:925.0px;width:166px;height:3px;background:#6a6d6f;border-radius:1px;"></div>
<svg style="left:1671px;top:918.5px;" width="16" height="17" viewBox="0 0 16 17"><path d="M1 0.5 H15 V9.5 L8 16.5 L1 9.5 Z" fill="#9fa2a4"/></svg>
<span class="t" style="left:1772.5px;top:920px;font-size:13px;line-height:16px;color:#bbbbbb;">0</span>
<span class="t" style="left:1556px;top:954px;font-size:13px;line-height:16px;color:#bbbbbb;letter-spacing:0.578px;">rotation</span>
<div style="left:1657px;top:952px;width:139px;height:18px;background:#313335;box-sizing:border-box;border:1px solid #646464;"></div>
<div style="left:1802px;top:953px;width:5px;height:16px;background:transparent;box-sizing:border-box;border:1px solid #5a5d5f;border-radius:2px;"></div>
<div style="left:1548px;top:972px;width:270px;height:14px;overflow:hidden;"><div style="left:-1548px;top:-972px;width:1px;height:1px;">
<span class="t" style="left:1556px;top:978px;font-size:13px;line-height:16px;color:#bbbbbb;letter-spacing:0.439px;">rotationX</span>
<div style="left:1657px;top:976px;width:139px;height:18px;background:#313335;box-sizing:border-box;border:1px solid #646464;"></div>
<div style="left:1802px;top:977px;width:5px;height:16px;background:transparent;box-sizing:border-box;border:1px solid #5a5d5f;border-radius:2px;"></div>
</div></div>
<div style="left:1548px;top:986px;width:280px;height:1px;background:#555759;"></div>
<div style="left:1828px;top:91px;width:22px;height:920px;background:#3c3f41;"></div>
<div style="left:1827px;top:91px;width:1px;height:920px;background:#323232;"></div>
<svg style="left:1832px;top:101px;" width="14" height="15" viewBox="0 0 14 15"><rect x="1" y="1" width="8" height="11" rx="1" fill="none" stroke="#afb1b3" stroke-width="1.5"/><rect x="5" y="7" width="9" height="8" fill="#3c3f41"/><path d="M6 14.5 A3.6 3.6 0 0 1 13.5 14.5 Z" fill="#afb1b3"/></svg>
<span class="t" style="left:1846.0px;top:121px;font-size:13px;line-height:16px;color:#bbbbbb;letter-spacing:-0.478px;transform-origin:0 0;transform:rotate(90deg);">Device Manager</span>
<svg style="left:1832px;top:238px;" width="13" height="10" viewBox="0 0 13 10"><rect x="0.8" y="0.8" width="11.4" height="8.4" rx="3" fill="none" stroke="#afb1b3" stroke-width="1.4"/><path d="M4 5 H9" stroke="#afb1b3" stroke-width="1.4"/></svg>
<span class="t" style="left:1846.0px;top:252.5px;font-size:13px;line-height:16px;color:#bbbbbb;letter-spacing:-0.250px;transform-origin:0 0;transform:rotate(90deg);">App Links Assistant</span>
<svg style="left:1831px;top:386px;" width="16" height="11" viewBox="0 0 16 11"></svg>
<svg style="left:1831.8px;top:386.6px;" width="15.3" height="10.8" viewBox="0 0 17 12"><path d="M15.3 1.2 C14.2 -0.1 12.2 -0.2 11 0.9 C10.6 1.3 10.9 1.8 11.3 1.6 C12.2 0.9 13.5 1 14.2 1.9 C15 2.9 14.6 4.2 13.6 4.9 L12.6 5.6 C12 3.4 10.2 2.4 8 2.4 C4.5 2.4 1.6 3.8 0.6 7.2 C0.2 8.6 0.2 10.2 0.4 11.6 L2.6 11.6 C2.6 10.6 3 9.8 3.8 9.8 C4.6 9.8 4.9 10.6 4.9 11.6 L7.3 11.6 C7.3 10.6 7.7 9.8 8.5 9.8 C9.3 9.8 9.6 10.6 9.6 11.6 L11.6 11.6 C12.4 9.6 13 8.2 14.6 6.6 C16.2 5.1 16.5 2.7 15.3 1.2 Z" fill="#afb1b3"/><circle cx="11.3" cy="4.6" r="0.7" fill="#3c3f41"/></svg>
<span class="t" style="left:1846.0px;top:403.5px;font-size:13px;line-height:16px;color:#bbbbbb;letter-spacing:-0.922px;transform-origin:0 0;transform:rotate(90deg);">Gradle</span>
<svg style="left:1832px;top:459px;" width="14" height="14" viewBox="0 0 14 14"><path d="M2 10 C3 9 3 7 3 5.5 A3.5 3.5 0 0 1 10 5.5 C10 7 10 9 11 10 Z" fill="#afb1b3"/><circle cx="6.5" cy="11.5" r="1.5" fill="#afb1b3"/><circle cx="11" cy="2.5" r="2.5" fill="#3592c4"/></svg>
<span class="t" style="left:1846.0px;top:477px;font-size:13px;line-height:16px;color:#bbbbbb;letter-spacing:-0.025px;transform-origin:0 0;transform:rotate(90deg);">Notifications</span>
<svg style="left:1832px;top:572px;" width="14" height="13" viewBox="0 0 14 13"><rect x="0.8" y="0.8" width="9.4" height="8.4" rx="1" fill="none" stroke="#afb1b3" stroke-width="1.4"/><rect x="6" y="4" width="8" height="9" fill="#3c3f41"/><rect x="7.3" y="5.3" width="5.4" height="6.4" fill="none" stroke="#afb1b3" stroke-width="1.3"/></svg>
<span class="t" style="left:1846.0px;top:589.5px;font-size:13px;line-height:16px;color:#bbbbbb;letter-spacing:-0.312px;transform-origin:0 0;transform:rotate(90deg);">Layout Validation</span>
<svg style="left:1833px;top:757px;" width="12" height="14" viewBox="0 0 12 14"><rect x="1" y="1" width="9" height="12" rx="1.2" fill="none" stroke="#afb1b3" stroke-width="1.6"/><path d="M3 10.5 H8" stroke="#afb1b3" stroke-width="1.2"/></svg>
<span class="t" style="left:1846.0px;top:776px;font-size:13px;line-height:16px;color:#bbbbbb;letter-spacing:-0.385px;transform-origin:0 0;transform:rotate(90deg);">Device Explorer</span>
<svg style="left:1832px;top:888px;" width="14" height="13" viewBox="0 0 14 13"><rect x="0.8" y="0.8" width="9.4" height="8.4" rx="1" fill="none" stroke="#afb1b3" stroke-width="1.4"/><rect x="6" y="4" width="8" height="9" fill="#3c3f41"/><rect x="7.3" y="5.3" width="5.4" height="6.4" fill="none" stroke="#afb1b3" stroke-width="1.3"/></svg>
<span class="t" style="left:1846.0px;top:905px;font-size:13px;line-height:16px;color:#bbbbbb;letter-spacing:-0.421px;transform-origin:0 0;transform:rotate(90deg);">Running Devices</span>
<div style="left:0px;top:1011px;width:1850px;height:1px;background:#323232;"></div>
<div style="left:0px;top:1012px;width:1850px;height:21px;background:#3c3f41;"></div>
<div style="left:0px;top:1033px;width:1850px;height:1px;background:#323232;"></div>
<svg style="left:36px;top:1016px;" width="10" height="13" viewBox="0 0 10 13"><path d="M2 0.5 V12.5 M2 8.5 C7 8.5 7.5 6 7.5 3" fill="none" stroke="#afb1b3" stroke-width="1.6"/><circle cx="7.5" cy="2.5" r="1.8" fill="#afb1b3"/><circle cx="2" cy="11" r="1.6" fill="#afb1b3"/></svg>
<span class="t" style="left:52.5px;top:1016px;font-size:13px;line-height:16px;color:#bbbbbb;letter-spacing:-0.094px;">Version Control</span>
<svg style="left:163px;top:1017px;" width="10" height="11" viewBox="0 0 10 11"><path d="M0.5 0.5 L9.5 5.5 L0.5 10.5 Z" fill="#afb1b3"/></svg>
<span class="t" style="left:179.5px;top:1016px;font-size:13px;line-height:16px;color:#bbbbbb;letter-spacing:-0.953px;">Run</span>
<svg style="left:220px;top:1018px;" width="14" height="10" viewBox="0 0 14 10"><path d="M1.5 9.5 A5.5 5.5 0 0 1 12.5 9.5" fill="none" stroke="#afb1b3" stroke-width="2"/><path d="M7 9 L3.6 3.4" stroke="#afb1b3" stroke-width="1.8" stroke-linecap="round"/></svg>
<span class="t" style="left:237.5px;top:1016px;font-size:13px;line-height:16px;color:#bbbbbb;letter-spacing:0.102px;">Profiler</span>
<svg style="left:301px;top:1019px;" width="11" height="9" viewBox="0 0 11 9"><path d="M0 1 H11 M0 4.5 H7 M0 8 H9" stroke="#afb1b3" stroke-width="1.7"/></svg>
<span class="t" style="left:317.5px;top:1016px;font-size:13px;line-height:16px;color:#bbbbbb;letter-spacing:-0.424px;">Logcat</span>
<svg style="left:378px;top:1017px;" width="13" height="11" viewBox="0 0 13 11"><path d="M3 0.7 H10 L12.3 3.8 L6.5 10.3 L0.7 3.8 Z M0.7 3.8 H12.3 M4.6 3.8 L6.5 10 L8.4 3.8 M3 0.7 L4.6 3.8 L6.5 0.7 L8.4 3.8 L10 0.7" fill="none" stroke="#afb1b3" stroke-width="1"/></svg>
<span class="t" style="left:395px;top:1016px;font-size:13px;line-height:16px;color:#bbbbbb;letter-spacing:-0.232px;">App Quality Insights</span>
<svg style="left:529px;top:1016px;" width="14" height="13" viewBox="0 0 14 13"><path d="M1 3.5 L5 1 L8.5 3.6 L6.6 6 Z" fill="#afb1b3"/><path d="M6 4.6 L12.5 11.2 L11 12.8 L4.6 6.2" fill="#afb1b3"/></svg>
<span class="t" style="left:547.5px;top:1016px;font-size:13px;line-height:16px;color:#bbbbbb;letter-spacing:-0.284px;">Build</span>
<svg style="left:597px;top:1018px;" width="10" height="9" viewBox="0 0 10 9"><path d="M0 1 H2 M3.5 1 H10 M0 4.5 H2 M3.5 4.5 H10 M0 8 H2 M3.5 8 H10" stroke="#afb1b3" stroke-width="1.7"/></svg>
<span class="t" style="left:612px;top:1016px;font-size:13px;line-height:16px;color:#bbbbbb;letter-spacing:-0.578px;">TODO</span>
<svg style="left:670px;top:1017px;" width="11" height="11" viewBox="0 0 11 11"><circle cx="5.5" cy="5.5" r="5.3" fill="#afb1b3"/><rect x="4.7" y="2.2" width="1.6" height="4" fill="#3c3f41"/><rect x="4.7" y="7.3" width="1.6" height="1.6" fill="#3c3f41"/></svg>
<span class="t" style="left:686px;top:1016px;font-size:13px;line-height:16px;color:#bbbbbb;letter-spacing:-0.178px;">Problems</span>
<svg style="left:762px;top:1017px;" width="11" height="11" viewBox="0 0 11 11"><rect width="11" height="11" rx="1" fill="#afb1b3"/><path d="M2 2.8 L4.6 5 L2 7.2 M5.5 8 H8.5" fill="none" stroke="#3c3f41" stroke-width="1.2"/></svg>
<span class="t" style="left:778.5px;top:1016px;font-size:13px;line-height:16px;color:#bbbbbb;letter-spacing:-0.080px;">Terminal</span>
<svg style="left:848px;top:1017px;" width="12" height="12" viewBox="0 0 12 12"><circle cx="6" cy="6" r="5.8" fill="#afb1b3"/><path d="M4.4 3.2 L8.8 6 L4.4 8.8 Z" fill="#3c3f41"/></svg>
<span class="t" style="left:865px;top:1016px;font-size:13px;line-height:16px;color:#bbbbbb;letter-spacing:-0.482px;">Services</span>
<svg style="left:935px;top:1016px;" width="12" height="13" viewBox="0 0 12 13"><rect x="2" y="0.5" width="8" height="7.5" rx="2" fill="#afb1b3"/><path d="M0.5 12.5 C1 9 11 9 11.5 12.5 Z M1 4.5 H11" fill="#afb1b3" stroke="#afb1b3" stroke-width="1"/></svg>
<span class="t" style="left:952px;top:1016px;font-size:13px;line-height:16px;color:#bbbbbb;letter-spacing:-0.252px;">App Inspection</span>
<svg style="left:1703px;top:1016px;" width="14" height="13" viewBox="0 0 14 13"><path d="M0.7 8 V0.7 H10" fill="none" stroke="#afb1b3" stroke-width="1.2"/><path d="M3.2 10.5 V3.2 H12.5 V6" fill="none" stroke="#afb1b3" stroke-width="1.2"/><circle cx="9" cy="8.5" r="2.6" fill="none" stroke="#afb1b3" stroke-width="1.3"/><path d="M11 10.5 L13.3 12.6" stroke="#afb1b3" stroke-width="1.5"/></svg>
<span class="t" style="left:1721px;top:1016px;font-size:13px;line-height:16px;color:#bbbbbb;letter-spacing:-0.196px;">Layout Inspector</span>
<div style="left:0px;top:1034px;width:1850px;height:21px;background:#3c3f41;"></div>
<svg style="left:13px;top:1038px;" width="13" height="12" viewBox="0 0 13 12"><rect x="0.6" y="2.6" width="9.8" height="8.8" fill="none" stroke="#afb1b3" stroke-width="1.2"/><path d="M2.6 0.6 H12.4 V9.4" fill="none" stroke="#afb1b3" stroke-width="1.2"/></svg>
<span class="t" style="left:40px;top:1035px;font-size:15px;line-height:18px;color:#bbbbbb;letter-spacing:-0.034px;">* daemon started successfully (30 minutes ago)</span>
<span class="t" style="left:1622.5px;top:1035px;font-size:15px;line-height:18px;color:#bbbbbb;letter-spacing:-0.620px;">9:5</span>
<span class="t" style="left:1654.5px;top:1035px;font-size:15px;line-height:18px;color:#bbbbbb;letter-spacing:-1.000px;">LF</span>
<span class="t" style="left:1682.5px;top:1035px;font-size:15px;line-height:18px;color:#787878;letter-spacing:-0.997px;">UTF-8</span>
<svg style="left:1732px;top:1038px;" width="13" height="12" viewBox="0 0 13 12"><path d="M0.5 0.5 H12.5 V9 H3 L0.5 11.5 Z" fill="#afb1b3"/><rect x="5.7" y="2" width="1.6" height="3.6" fill="#3c3f41"/><rect x="5.7" y="6.5" width="1.6" height="1.5" fill="#3c3f41"/></svg>
<span class="t" style="left:1756.5px;top:1035px;font-size:15px;line-height:18px;color:#bbbbbb;letter-spacing:-0.568px;">4 spaces</span>
<svg style="left:1824px;top:1037px;" width="12" height="13" viewBox="0 0 12 13"><path d="M2.2 6 V3.5 A2.6 2.6 0 0 1 7.2 2.8" fill="none" stroke="#afb1b3" stroke-width="1.4"/><rect x="3.5" y="6" width="8" height="6.5" fill="#afb1b3"/></svg>
<div style="left:0px;top:0px;width:1px;height:1055px;background:#151515;"></div>
<div style="left:1849px;top:0px;width:1px;height:1055px;background:#151515;"></div>
<div style="left:0px;top:1054px;width:1850px;height:1px;background:#151515;"></div>
</div></body></html>
